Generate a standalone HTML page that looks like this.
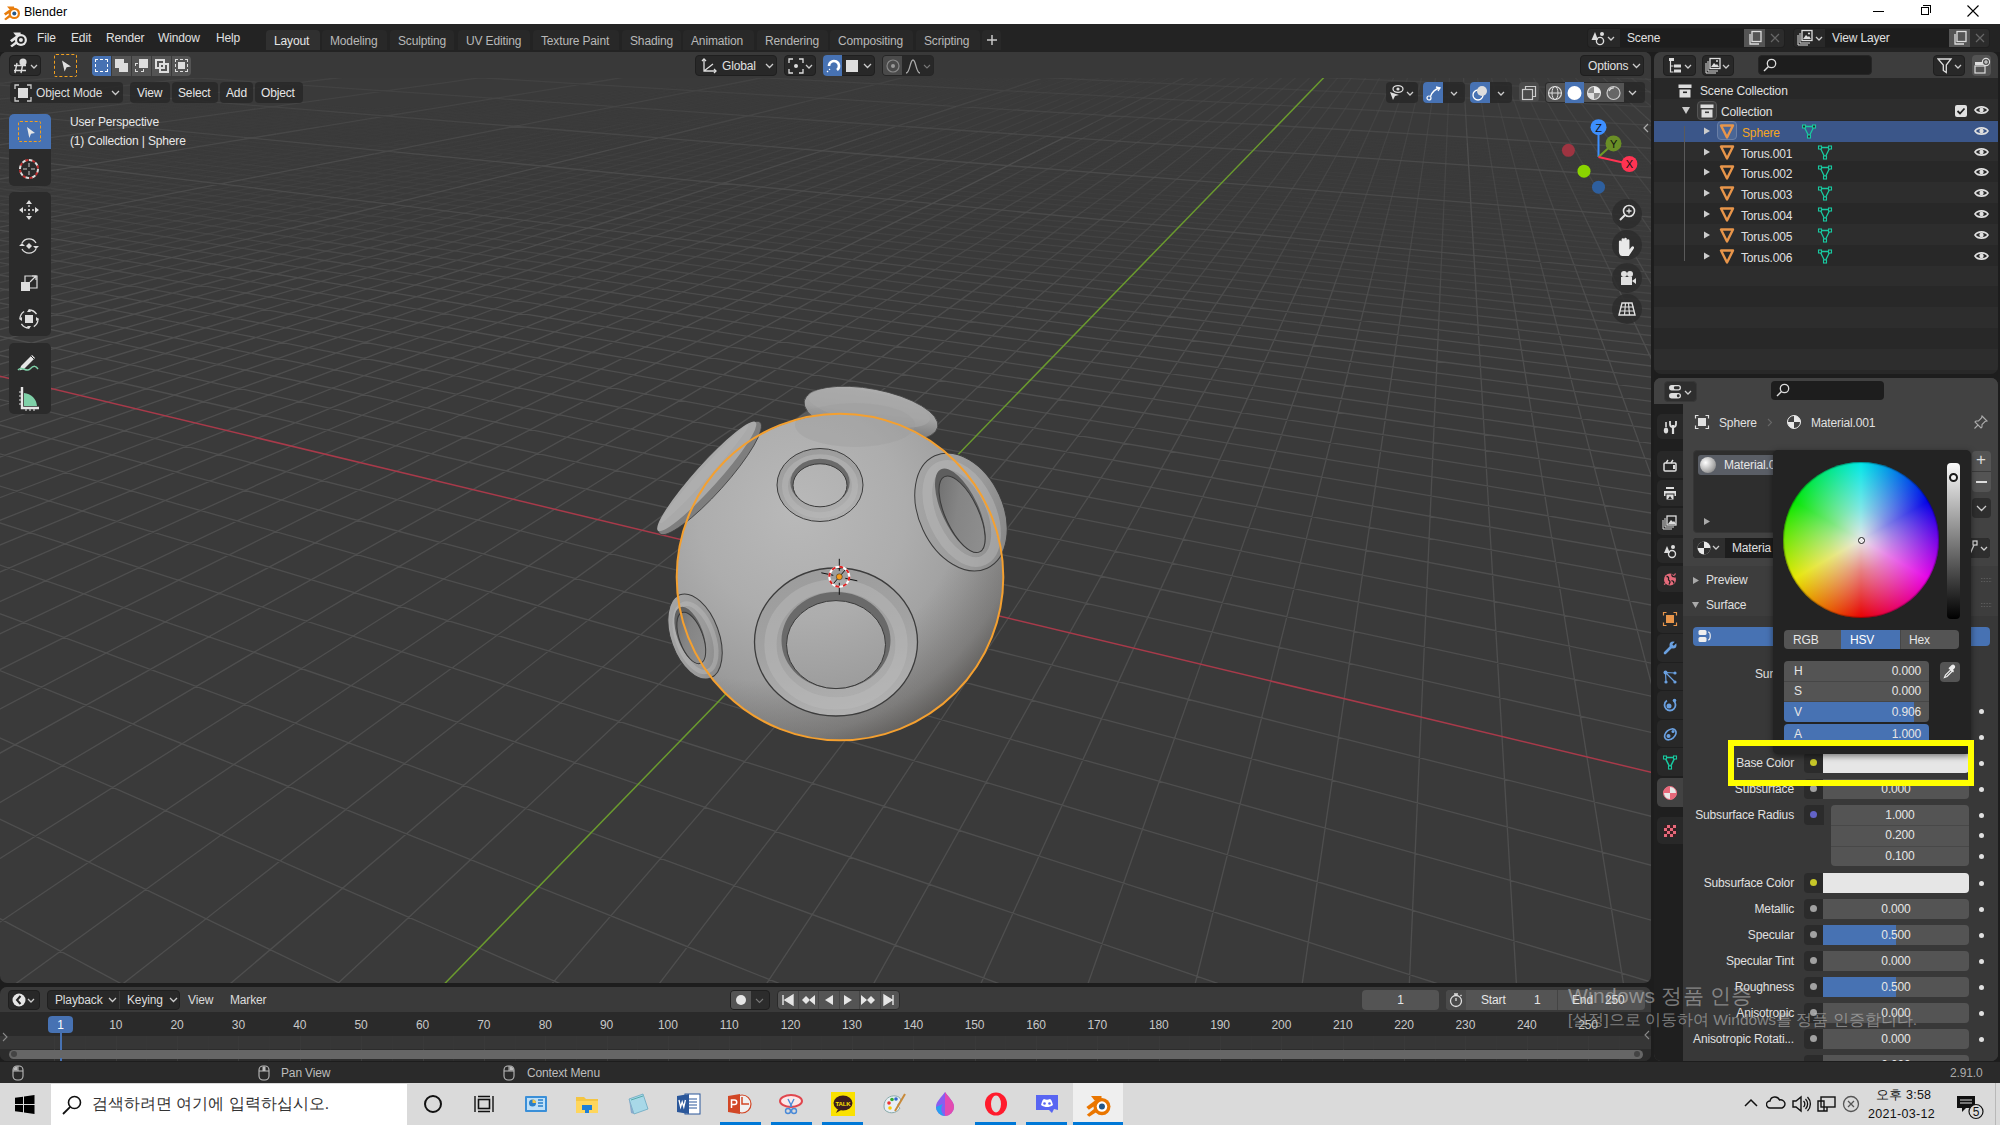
<!DOCTYPE html>
<html><head><meta charset="utf-8">
<style>
*{box-sizing:border-box;margin:0;padding:0}
html,body{width:2000px;height:1125px;overflow:hidden;background:#1d1d1d;font-family:"Liberation Sans",sans-serif;color:#e6e6e6;font-size:12px;letter-spacing:-0.15px}
.a{position:absolute}
.t{position:absolute;white-space:nowrap;line-height:14px}
#title{left:0;top:0;width:2000px;height:24px;background:#fff;color:#000}
#topbar{left:0;top:24px;width:2000px;height:28px;background:#232323}
#vp{left:0;top:52px;width:1651px;height:931px;background:#3a3a3a;border-radius:7px;overflow:hidden}
#outl{left:1654px;top:52px;width:344px;height:322px;background:#282828;border-radius:7px;overflow:hidden}
#props{left:1654px;top:378px;width:344px;height:683px;background:#424242;border-radius:7px;overflow:hidden}
#tl{left:0;top:987px;width:1651px;height:74px;background:#303030;border-radius:7px;overflow:hidden}
#status{left:0;top:1062px;width:2000px;height:21px;background:#2a2a2a}
#taskbar{left:0;top:1083px;width:2000px;height:42px;background:#dadada}
.tab{position:absolute;top:30px;height:20px;border-radius:4px 4px 0 0;background:#282828;color:#b8b8b8}
.tab span{position:absolute;top:4px}
.btn{position:absolute;background:#282828;border-radius:4px;border:1px solid #1f1f1f}
.dd:after{content:"";position:absolute;right:6px;top:6px;width:4px;height:4px;border-right:1.3px solid #ccc;border-bottom:1.3px solid #ccc;transform:rotate(45deg)}
.hb{position:absolute;background:rgba(40,40,40,0.85);border-radius:4px;color:#dcdcdc}
</style></head><body>
<!-- TITLE BAR -->
<div id="title" class="a">
 <svg class="a" style="left:3px;top:3px" width="18" height="18" viewBox="0 0 18 18">
  <path d="M4 3.4h7v2.9H6.4z" fill="#e87d0d"/><path d="M0.9 10.6L8 5.4l1.8 2.1L2.6 12.5z" fill="#e87d0d"/><path d="M1.2 15.9l5.6-4.6 1.5 2.3-5.5 3.6z" fill="#e87d0d"/>
  <circle cx="11.3" cy="10.4" r="5.7" fill="#e87d0d"/><circle cx="11.3" cy="10.4" r="3.5" fill="#fff"/><circle cx="11.3" cy="10.4" r="2" fill="#265787"/>
 </svg>
 <div class="t" style="left:24px;top:5px;font-size:12.5px;color:#000;letter-spacing:0">Blender</div>
 <div class="a" style="left:1873px;top:11px;width:11px;height:1px;background:#000"></div>
 <div class="a" style="left:1921px;top:7px;width:8px;height:8px;border:1px solid #000"></div>
 <div class="a" style="left:1923px;top:5px;width:8px;height:8px;border-top:1px solid #000;border-right:1px solid #000"></div>
 <svg class="a" style="left:1966px;top:4px" width="14" height="14" viewBox="0 0 14 14"><path d="M1.5 1.5L12.5 12.5M12.5 1.5L1.5 12.5" stroke="#000" stroke-width="1.1"/></svg>
</div>
<!-- TOP BAR -->
<div id="topbar" class="a">
 <svg class="a" style="left:9px;top:5px" width="19" height="19" viewBox="0 0 18 18">
  <path d="M4 3.4h7v2.9H6.4z" fill="#e6e6e6"/><path d="M0.9 10.6L8 5.4l1.8 2.1L2.6 12.5z" fill="#e6e6e6"/><path d="M1.2 15.9l5.6-4.6 1.5 2.3-5.5 3.6z" fill="#e6e6e6"/>
  <circle cx="11.3" cy="10.4" r="5.7" fill="#e6e6e6"/><circle cx="11.3" cy="10.4" r="3.6" fill="#232323"/><circle cx="11.3" cy="10.4" r="1.9" fill="#e6e6e6"/>
 </svg>
 <div class="t" style="left:37px;top:7px;color:#e0e0e0">File</div>
 <div class="t" style="left:71px;top:7px;color:#e0e0e0">Edit</div>
 <div class="t" style="left:106px;top:7px;color:#e0e0e0">Render</div>
 <div class="t" style="left:158px;top:7px;color:#e0e0e0">Window</div>
 <div class="t" style="left:216px;top:7px;color:#e0e0e0">Help</div>
 <div class="tab" style="left:266px;width:54px;top:6px;background:#303030;color:#e6e6e6"><span style="left:8px">Layout</span></div>
 <div class="tab" style="left:322px;width:65px;top:6px"><span style="left:8px">Modeling</span></div>
 <div class="tab" style="left:390px;width:64px;top:6px"><span style="left:8px">Sculpting</span></div>
 <div class="tab" style="left:458px;width:72px;top:6px"><span style="left:8px">UV Editing</span></div>
 <div class="tab" style="left:533px;width:86px;top:6px"><span style="left:8px">Texture Paint</span></div>
 <div class="tab" style="left:622px;width:59px;top:6px"><span style="left:8px">Shading</span></div>
 <div class="tab" style="left:683px;width:71px;top:6px"><span style="left:8px">Animation</span></div>
 <div class="tab" style="left:757px;width:71px;top:6px"><span style="left:8px">Rendering</span></div>
 <div class="tab" style="left:830px;width:83px;top:6px"><span style="left:8px">Compositing</span></div>
 <div class="tab" style="left:916px;width:64px;top:6px"><span style="left:8px">Scripting</span></div>
 <div class="a" style="left:982px;top:6px;width:19px;height:20px;background:#282828;border-radius:4px 4px 0 0"></div><svg class="a" style="left:986px;top:10px" width="12" height="12" viewBox="0 0 12 12"><path d="M6 1v10M1 6h10" stroke="#c8c8c8" stroke-width="1.5"/></svg>
 <!-- scene selector -->
 <div class="btn" style="left:1587px;top:4px;width:198px;height:20px;background:#1d1d1d"></div>
 <div class="a" style="left:1588px;top:5px;width:32px;height:18px;background:#282828;border-radius:3px 0 0 3px"></div>
 <div class="a" style="left:1744px;top:5px;width:21px;height:18px;background:#545454"></div>
 <div class="a" style="left:1765px;top:5px;width:19px;height:18px;background:#2c2c2c;border-radius:0 3px 3px 0"></div>
 <div class="t" style="left:1627px;top:7px;color:#e0e0e0">Scene</div>
 <svg class="a" style="left:1590px;top:6px" width="30" height="16" viewBox="0 0 30 16"><path d="M5 2l-3.5 8H8z" fill="#ddd"/><circle cx="12" cy="4" r="2" fill="#ddd"/><circle cx="10" cy="11" r="3.6" fill="none" stroke="#ddd" stroke-width="1.4"/><path d="M18 7l3 3 3-3" stroke="#ccc" stroke-width="1.3" fill="none"/></svg>
 <svg class="a" style="left:1747px;top:6px" width="16" height="16" viewBox="0 0 16 16"><rect x="5" y="1.5" width="9" height="10" fill="none" stroke="#ddd" stroke-width="1.3"/><path d="M3 4v10h9" stroke="#ddd" stroke-width="1.3" fill="none"/></svg>
 <svg class="a" style="left:1769px;top:8px" width="12" height="12" viewBox="0 0 12 12"><path d="M2 2l8 8M10 2l-8 8" stroke="#666" stroke-width="1.2"/></svg>
 <div class="btn" style="left:1793px;top:4px;width:197px;height:20px;background:#1d1d1d"></div>
 <div class="a" style="left:1794px;top:5px;width:31px;height:18px;background:#282828;border-radius:3px 0 0 3px"></div>
 <div class="a" style="left:1949px;top:5px;width:21px;height:18px;background:#545454"></div>
 <div class="a" style="left:1970px;top:5px;width:19px;height:18px;background:#2c2c2c;border-radius:0 3px 3px 0"></div>
 <div class="t" style="left:1832px;top:7px;color:#e0e0e0">View Layer</div>
 <svg class="a" style="left:1796px;top:5px" width="30" height="18" viewBox="0 0 30 18"><rect x="6" y="1.5" width="10" height="10" fill="none" stroke="#ddd" stroke-width="1.3"/><path d="M4 4v10h10M2 6v10h10" stroke="#ddd" stroke-width="1" fill="none"/><path d="M7 10l3-4 2 2 1-1 2 3z" fill="#ddd"/><circle cx="13" cy="4.5" r="1.1" fill="#ddd"/><path d="M20 8l3 3 3-3" stroke="#ccc" stroke-width="1.3" fill="none"/></svg>
 <svg class="a" style="left:1952px;top:6px" width="16" height="16" viewBox="0 0 16 16"><rect x="5" y="1.5" width="9" height="10" fill="none" stroke="#ddd" stroke-width="1.3"/><path d="M3 4v10h9" stroke="#ddd" stroke-width="1.3" fill="none"/></svg>
 <svg class="a" style="left:1974px;top:8px" width="12" height="12" viewBox="0 0 12 12"><path d="M2 2l8 8M10 2l-8 8" stroke="#666" stroke-width="1.2"/></svg>
</div>
<!-- VIEWPORT -->
<div id="vp" class="a">
 <svg class="a" style="left:0;top:-52px" width="1651" height="1035" viewBox="0 0 1651 1035">
  <g stroke="#4e4e4e" stroke-width="1.35" fill="none"><path stroke-opacity="0.08" d="M-5.9 134.4L32 129.4M-5.2 136.9L34.4 131.6L72 126.6M-4.4 139.6L37 134L76 128.7L113 123.7M-3.6 142.3L39.2 136.4L79.6 130.9L117.7 125.6L153.8 120.7M-7.5 148.7L39.7 142.1L83.9 135.8L125.5 129.9L164.6 124.4L201.5 119.2M-6.7 151.7L42.4 144.7L88.4 138.1L131.4 131.9L171.8 126.1L209.8 120.6L245.7 115.5M-5.9 154.8L44.9 147.4L92.2 140.5L136.5 134L178.1 128L217 122.3L253.7 116.9M-5.1 157.9L47.7 150.1L96.9 142.8L142.7 136.1L185.5 129.7L225.6 123.8L263.3 118.2L298.7 113M-4.3 161.2L50.6 152.9L101.6 145.3L148.9 138.1L193.1 131.5L234.4 125.3L273.1 119.5L309.3 114M-3.4 164.5L53.7 155.8L106.4 147.7L155.3 140.3L200.9 133.3L243.3 126.9L282.9 120.8L320.1 115.1L354.9 109.8M-2.5 167.9L56.4 158.8L110.7 150.4L161 142.6L207.6 135.4L251 128.6L291.5 122.4L329.4 116.5L364.8 111L398.1 105.8M54.3 162.7L111.3 153.7L163.8 145.4L212.4 137.8L257.4 130.7L299.3 124.1L338.4 117.9L374.9 112.2L409.1 106.8M57.5 165.9L116.4 156.4L170.6 147.7L220.5 139.7L266.7 132.3L309.6 125.5L349.5 119.1L386.7 113.1L421.5 107.5L454.1 102.3M126.5 162.1L183.8 152.6L236.3 143.9L284.6 135.9L329.3 128.5L370.7 121.6L409.2 115.3L445 109.3L478.4 103.8L509.7 98.6M191 155.1L245 146L294.5 137.6L340.1 129.9L382.3 122.8L421.4 116.2L457.8 110.1L491.7 104.4L523.3 99M198.5 157.6L253.8 148.1L304.5 139.4L351.1 131.4L394.1 124L433.8 117.2L470.7 110.9L505 105L537 99.5L566.9 94.4M262.9 150.3L314.7 141.2L362.3 132.9L406 125.3L446.3 118.2L483.7 111.7L518.4 105.6L550.7 100L580.9 94.7M267.6 153.3L321 143.8L369.8 135.1L414.5 127.1L455.8 119.8L493.9 113L529.2 106.7L562 100.9L592.5 95.4L621 90.4M331.5 145.6L381.3 136.6L426.8 128.4L468.6 120.8L507.2 113.8L542.8 107.3L575.9 101.3L606.6 95.8L635.3 90.6M342.3 147.6L393 138.2L439.2 129.7L481.6 121.8L520.6 114.6L556.6 108L589.9 101.8L620.8 96.1L649.6 90.8L676.5 85.8M404.9 139.8L451.8 130.9L494.7 122.9L534.1 115.4L570.4 108.6L604 102.3L635.1 96.4L664 91L690.9 85.9M415.5 141.7L463 132.6L506.4 124.2L546.2 116.6L582.7 109.6L616.4 103.1L647.7 97.1L676.6 91.5L703.6 86.3L728.8 81.5M487.2 135.6L531.9 126.7L572.7 118.5L610 111L644.3 104.2L675.9 97.9L705.2 92L732.3 86.6L757.6 81.5L781.1 76.8M500.5 137L545.7 127.8L586.8 119.4L624.3 111.7L658.8 104.7L690.5 98.2L719.7 92.2L746.8 86.7L772 81.5L795.5 76.7M558.1 129.2L599.5 120.6L637.2 112.7L671.7 105.5L703.4 98.9L732.7 92.7L759.8 87.1L784.9 81.9L808.3 77M572.2 130.3L613.8 121.4L651.7 113.4L686.3 106L718.1 99.2L747.3 93L774.3 87.2L799.4 81.9L822.6 76.9M628.4 122.3L666.4 114L701.1 106.5L732.8 99.5L762 93.2L788.9 87.3L813.9 81.9L837 76.8M643 123.2L681.2 114.7L715.9 107L747.6 99.9L776.7 93.4L803.6 87.4L828.3 81.9L851.3 76.7M656.4 124.5L694.6 115.7L729.3 107.8L761 100.6L790 93.9L816.7 87.8L841.4 82.2L864.2 77M708.7 116.6L743.6 108.5L775.4 101L804.5 94.2L831.2 88L855.8 82.2L878.5 76.9M723.9 117.3L758.7 109L790.4 101.4L819.4 94.4L845.9 88.1L870.3 82.2L892.8 76.8M787.8 110.4L819.3 102.4L847.9 95.2L874 88.6L898 82.6L920.1 77M803.3 110.9L834.5 102.8L862.9 95.4L888.8 88.7L912.5 82.6L934.3 76.9M849.8 103.1L877.9 95.6L903.6 88.8L927.1 82.6L948.6 76.8M864.7 103.6L892.8 95.9L918.2 89L941.5 82.6L962.9 76.7M878.9 104.3L906.7 96.5L931.9 89.4L954.8 82.9L975.9 77M921.9 96.7L946.8 89.5L969.4 82.9L990.2 76.9M937.1 97L961.7 89.6L984 82.9L1004.4 76.8M952.5 97.2L976.6 89.7L998.6 82.9L1018.6 76.8M991.6 89.8L1013.1 82.9L1032.8 76.7M1041.2 83.3L1060.1 76.8M-2.5 124.9L53.3 130.6M-3.7 120.9L52.3 126.5L111.8 132.4M-4.8 117.1L51 122.6L110.5 128.4L173.8 134.6M-4.2 110.2L51.7 115.5L111.2 121.1L174.6 127L242.2 133.4L314.6 140.2M-2.5 107.1L53.4 112.3L112.7 117.7L176 123.6L243.5 129.8L315.8 136.5L393.3 143.6M-3.5 103.9L52.4 108.9L111.9 114.3L175.3 120L243 126.2L315.5 132.7L393.2 139.8L476.8 147.3M-4.6 100.7L51.3 105.7L110.7 111L174 116.6L241.6 122.6L314 129L391.6 135.9L475.1 143.3L565.1 151.3M-3 98L53 102.8L112.5 108L176 113.6L243.7 119.5L316.2 125.8L394 132.6L477.6 139.9L567.8 147.7L665.4 156.3M-4 95.1L51.9 99.8L111.4 104.9L174.7 110.4L242.4 116.2L314.8 122.4L392.4 129L476 136.2L566 143.9L663.5 152.2M53.4 97.2L112.8 102.2L176 107.5L243.6 113.2L315.8 119.3L393.3 125.8L476.6 132.8L566.5 140.4L663.6 148.5L769 157.4M112 99.3L175.4 104.6L243.1 110.2L315.5 116.2L393.2 122.6L476.8 129.5L566.9 137L664.4 145L770.2 153.8L885.4 163.3M174.2 101.7L241.8 107.2L314.2 113.1L391.8 119.4L475.2 126.2L565.2 133.5L662.6 141.4L768.2 150L883.2 159.3M314.9 107.5L392.6 113.6L476.1 120.1L566.1 127.2L663.5 134.9L769.2 143.2L884.3 152.3L1010.1 162.2M315.9 104.8L393.4 110.8L476.7 117.3L566.5 124.3L663.7 131.8L769.1 139.9L883.8 148.8L1009.2 158.5L1146.8 169.2M393.3 108.1L476.8 114.5L566.9 121.4L664.4 128.8L770.2 136.9L885.3 145.6L1011.2 155.2L1149.3 165.8L1301.6 177.4M489.7 112.8L579.1 119.5L675.7 126.7L780.4 134.6L894.3 143.1L1018.6 152.4L1154.8 162.7L1304.8 173.9M516.2 112.1L604.8 118.6L700.3 125.7L803.7 133.3L915.9 141.6L1038.1 150.6L1171.8 160.5L1318.6 171.3M628.3 117.6L722.3 124.5L823.8 131.9L933.8 139.9L1053.3 148.5L1183.6 158L1326.3 168.4L1483.3 179.8M651.5 116.6L743.9 123.3L843.6 130.4L951.3 138.1L1068.1 146.5L1195.1 155.6L1333.8 165.6L1486 176.5M767.7 122.3L865.9 129.2L971.9 136.7L1086.6 144.8L1211.2 153.6L1346.8 163.2L1495.2 173.7L1658.2 185.2M786.9 121L883.4 127.7L987.3 134.9L1099.5 142.7L1221.1 151.2L1353.2 160.4L1497.2 170.4L1655 181.4M923.8 125.2L1023.7 131.9L1131.2 139.2L1247 147L1372.4 155.5L1508.4 164.7L1656.5 174.8M1039.8 130.4L1144.6 137.3L1257.3 144.9L1378.9 153L1510.6 161.8L1653.6 171.3M1059 129L1161.7 135.8L1272 143.1L1390.8 150.9L1519 159.3L1657.9 168.5M1174.6 134L1281.8 141L1397 148.4L1521 156.5L1655 165.2M1191.2 132.5L1296 139.2L1408.4 146.4L1529.1 154.2L1659.2 162.5M1304.3 137.1L1413.5 144L1530.5 151.4L1656.4 159.4M1313.5 135.2L1419.2 141.8L1532.3 148.8L1653.6 156.4M1430 139.9L1540 146.6L1657.7 153.9M1541.7 144.1L1655 151"/>
<path stroke-opacity="0.17" d="M-7.7 172.5L54.3 162.7M-6.8 176.2L57.5 165.9M-5 183.9L63.8 172.5L126.5 162.1M-4.1 188L67.3 176L132.1 165L191 155.1M-3.1 192.2L70.9 179.5L137.8 168L198.5 157.6M-2.1 196.6L74.6 183.2L143.6 171.1L206.1 160.2L262.9 150.3M72.2 188L144.1 175.2L208.9 163.7L267.6 153.3M76.1 192L150.3 178.5L216.9 166.4L277 155.5L331.5 145.6M156.6 181.9L225 169.2L286.6 157.9L342.3 147.6M163.1 185.3L233.4 172.1L296.4 160.2L353.3 149.5L404.9 139.8M241 175.2L305.3 162.9L363.2 151.7L415.5 141.7M322.6 168.6L383.4 156.4L437.9 145.5L487.2 135.6M333.3 171.2L395.2 158.5L450.6 147.2L500.5 137M343.2 174.1L406 161L462.1 149.2L512.5 138.7L558.1 129.2M418.3 163.2L475.3 151L526.3 140.1L572.2 130.3M430.9 165.4L488.6 152.8L540.2 141.6L586.5 131.5L628.4 122.3M502.2 154.7L554.3 143L601 132.6L643 123.2M514.7 156.9L567.2 144.9L614.1 134.1L656.4 124.5M526.5 159.3L579.9 146.8L627.5 135.7L670.2 125.7L708.7 116.6M594.7 148.3L642.5 136.9L685.3 126.6L723.9 117.3M623.5 151.8L671.7 139.7L714.7 128.8L753.2 119.1L787.8 110.4M687.3 140.9L730.3 129.8L768.7 119.8L803.3 110.9M703.1 142.2L746.1 130.8L784.4 120.6L818.8 111.4L849.8 103.1M761 132L799.4 121.5L833.8 112.1L864.7 103.6M775.8 133.4L814 122.6L848.2 113L878.9 104.3M792.1 134.4L830.1 123.4L864 113.5L894.4 104.7L921.9 96.7M846.4 124.1L880 114.1L910.1 105.1L937.1 97M862.7 124.9L896 114.6L925.7 105.4L952.5 97.2M879.2 125.6L912.1 115.2L941.5 105.8L967.8 97.4L991.6 89.8M943.1 116.8L971.7 107L997.3 98.3L1020.4 90.4L1041.2 83.3M959.6 117.4L987.7 107.4L1012.8 98.5L1035.4 90.5L1055.8 83.3L1074.3 76.8M1003.8 107.8L1028.4 98.7L1050.5 90.6L1070.4 83.3L1088.4 76.7M1018.9 108.5L1043.1 99.3L1064.6 91.1L1084.1 83.7L1101.7 76.9M1058.7 99.6L1079.8 91.2L1098.7 83.7L1115.8 76.9M1074.5 99.8L1095 91.3L1113.4 83.7L1130 76.8M1090 100.1L1110 91.4L1127.9 83.7L1144.1 76.7M1124.4 91.9L1141.8 84L1157.4 76.9M1139.7 92L1156.5 84L1171.5 76.9M-2.6 146.9L53.5 153.3M-3.9 141.9L52.1 148.1L111.6 154.8L175 161.9M-5.2 137.2L50.7 143.3L110.1 149.7L173.5 156.6L241.1 164M-3.2 133L52.8 139L112.4 145.3L175.9 152.1L243.6 159.3L316.2 167M-4.4 128.7L51.5 134.5L111 140.7L174.4 147.3L242 154.4L314.5 161.9L392.1 170M53.3 130.6L112.7 136.6L175.9 143.1L243.5 150L315.7 157.3L393.2 165.2L476.5 173.7M111.8 132.4L175.2 138.8L242.9 145.5L315.4 152.8L393.1 160.5L476.7 168.9L566.9 177.9M173.8 134.6L241.4 141.2L313.8 148.3L391.4 155.9L474.8 164L564.9 172.8M314.6 140.2L392.3 147.5L475.8 155.4L565.9 163.8L663.4 173L769.1 182.9M393.3 143.6L476.6 151.3L566.4 159.6L663.6 168.5L769 178.3L883.7 188.8M476.8 147.3L566.9 155.5L664.4 164.3L770.2 173.9L885.5 184.3M565.1 151.3L662.4 160L768.1 169.4L883.1 179.6L1008.8 190.7M665.4 156.3L771.3 165.5L886.6 175.5L1012.6 186.5L1151 198.6M663.5 152.2L769.2 161.3L884.3 171.2L1010.1 181.9L1148.2 193.8M769 157.4L883.8 167.1L1009.2 177.6L1146.7 189.2L1298.3 202M885.4 163.3L1011.3 173.7L1149.5 185.1L1301.8 197.8M883.2 159.3L1008.9 169.6L1146.8 180.8L1298.9 193.2L1467.4 206.9M1010.1 162.2L1148.1 173L1300.3 185L1469 198.3L1656.9 213.1M1146.8 169.2L1298.4 180.9L1466.3 193.9L1653.4 208.4M1301.6 177.4L1470.4 190.2L1658.5 204.6M1304.8 173.9L1470.6 186.3L1655.1 200.2M1318.6 171.3L1480.5 183.3L1660 196.6M1483.3 179.8L1656.7 192.5M1486 176.5L1653.5 188.5"/>
<path stroke-opacity="0.25" d="M-8 202.3L72.2 188M-7 207L76.1 192M-6 211.9L80.1 196L156.6 181.9M-4.9 217L84.2 200.2L163.1 185.3M88 204.6L169.1 189L241 175.2M177.8 197.5L254.6 182.2L322.6 168.6M185.1 201.5L263.8 185.4L333.3 171.2M191.8 205.7L272.3 188.9L343.2 174.1M282 192.2L354.4 176.8L418.3 163.2M292.1 195.7L365.9 179.6L430.9 165.4M377.7 182.5L443.8 167.7L502.2 154.7M388.6 185.7L455.6 170.4L514.7 156.9M397.3 189.5L466.1 173.4L526.5 159.3M479.8 175.9L540.8 161.3L594.7 148.3M506.7 181.3L568.9 165.6L623.5 151.8M584.1 167.7L639 153.5L687.3 140.9M599.5 169.8L654.7 155.1L703.1 142.2M613 172.5L668.9 157.2L717.8 143.9L761 132M683.8 159.3L732.7 145.5L775.8 133.4M700.3 161.1L749.2 146.9L792.1 134.4M765.8 148.2L808.6 135.4L846.4 124.1M782.7 149.6L825.3 136.4L862.7 124.9M799.9 151L842.1 137.5L879.2 125.6M874.2 140.3L910.8 127.8L943.1 116.8M891.7 141.4L927.8 128.6L959.6 117.4M944.9 129.4L976.1 117.9L1003.8 107.8M961.1 130.6L991.8 118.9L1018.9 108.5M978.5 131.4L1008.6 119.5L1035.2 108.9L1058.7 99.6M1025.6 120L1051.5 109.3L1074.5 99.8M1042.2 120.8L1067.6 109.8L1090 100.1M1058.5 121.8L1083.2 110.6L1105 100.7L1124.4 91.9M1099.8 111L1120.9 100.9L1139.7 92M1152.8 101.4L1170.3 92.2L1185.8 84L1199.7 76.7M1168.2 102L1184.9 92.7L1199.8 84.4L1213.1 76.9M1184.3 102.2L1200.3 92.8L1214.5 84.4L1227.2 76.9M1215.6 92.9L1229.1 84.4L1241.2 76.8M1243.8 84.4L1255.3 76.7M1258.1 84.7L1268.8 77M1652.1 82.9L1651.6 82.5L1651 82.1L1650.4 81.7L1649.9 81.3L1649.3 80.9L1648.8 80.5L1648.2 80.1L1647.7 79.7L1647.2 79.3L1646.6 78.9L1646.1 78.6L1645.6 78.2L1645 77.8L1644.5 77.4M-4.1 168.5L51.8 175.5M-5.6 162.4L50.3 169.3L109.8 176.6M-4.7 151.7L51.2 158.2L110.7 165.2L174.1 172.6L241.8 180.5M53.5 153.3L113.1 160.1L176.7 167.3L244.5 175.1L317.1 183.3M175 161.9L242.8 169.4L315.3 177.5L393 186.1M241.1 164L313.5 171.9L391.1 180.3L474.6 189.4M316.2 167L394 175.3L477.7 184.2L568 193.8M392.1 170L475.7 178.7L565.8 188.1L663.3 198.3M476.5 173.7L566.4 182.9L663.5 192.8L768.9 203.5M566.9 177.9L664.4 187.6L770.3 198.2L885.6 209.7M564.9 172.8L662.2 182.4L767.9 192.7L882.9 204M769.1 182.9L884.2 193.8L1010.1 205.6L1148.2 218.6M883.7 188.8L1009.1 200.4L1146.6 213.1M885.5 184.3L1011.4 195.7L1149.7 208.2L1302.1 222M1008.8 190.7L1146.8 203L1298.9 216.5L1467.4 231.5M1151 198.6L1303.5 211.9L1472.6 226.7M1148.2 193.8L1300.4 206.8L1469.1 221.3L1657.1 237.4M1298.3 202L1466.3 216.1L1653.3 231.8M1301.8 197.8L1470.7 211.7L1658.8 227.3M1467.4 206.9L1655.1 222.1"/>
<path stroke-opacity="0.33" d="M-3.8 222.3L88 204.6M-9.3 235L90.6 215L177.8 197.5M95.2 219.8L185.1 201.5M99.6 224.9L191.8 205.7M104.5 230.1L199.5 209.9L282 192.2M207.5 214.2L292.1 195.7M215.7 218.6L302.4 199.3L377.7 182.5M311.9 203.2L388.6 185.7M318.3 208L397.3 189.5M329.5 211.9L410 192.6L479.8 175.9M435.1 199.4L506.7 181.3M448.8 202.7L521.3 183.9L584.1 167.7M536.2 186.6L599.5 169.8M548.7 190.2L613 172.5M563 193.4L627.8 175.1L683.8 159.3M644.1 177.4L700.3 161.1M660.8 179.6L717 162.8L765.8 148.2M677.8 182L734.1 164.6L782.7 149.6M751.4 166.4L799.9 151M784.1 171.1L832.4 154.6L874.2 140.3M850.3 156L891.7 141.4M868.4 157.5L909.3 142.5L944.9 129.4M926 144L961.1 130.6M944.1 145.1L978.5 131.4M962.3 146.3L996.1 132.2L1025.6 120M1013.3 133.3L1042.2 120.8M1030.2 134.6L1058.5 121.8M1048.3 135.4L1075.8 122.4L1099.8 111M1110.8 123.6L1133.2 111.8L1152.8 101.4M1127.7 124.6L1149.3 112.6L1168.2 102M1166.2 113L1184.3 102.2M1183 113.5L1200.3 102.6L1215.6 92.9M1216.5 102.8L1231 93L1243.8 84.4M1232.4 103.3L1246 93.5L1258.1 84.7M1249 103.3L1261.7 93.4L1272.9 84.7L1282.8 76.9M1265.8 103.2L1277.4 93.3L1287.7 84.6L1296.8 76.8M1282.6 103.1L1293.1 93.2L1302.5 84.5L1310.8 76.7M1315.5 103.3L1324.1 93.4L1331.7 84.7L1338.4 76.9M1332.2 103.2L1339.8 93.3L1346.5 84.6L1352.4 76.8M1348.9 103.1L1355.4 93.2L1361.2 84.5L1366.4 76.7M1365.3 103.4L1370.8 93.5L1375.7 84.8L1380.1 77M1382 103.3L1386.5 93.4L1390.5 84.7L1394 76.9M1398.6 103.2L1402.1 93.3L1405.2 84.6L1408 76.8M1415.3 103.1L1417.7 93.2L1419.9 84.5L1421.9 76.7M1431.8 103.4L1433.3 93.5L1434.5 84.8L1435.7 77M1448.4 103.3L1448.9 93.4L1449.2 84.7L1449.6 76.9M1481.6 103.1L1480 93.2L1478.6 84.5L1477.3 76.7M1497.7 101.6L1495.3 92.4L1493.2 84.3L1491.3 77M1513.2 99.1L1510.2 90.9L1507.6 83.6L1505.1 76.9M1531.9 104.5L1528.2 96.5L1524.8 89.4L1521.8 82.8L1519 76.8M1546.7 101.1L1542.8 94.2L1539.2 87.9L1535.8 82.1L1532.8 76.7M1565.2 104.3L1561 98L1557 92.2L1553.4 86.7L1550 81.7L1546.8 77M1578.6 100.1L1574.6 94.9L1570.7 89.9L1567.2 85.3L1563.8 81L1560.6 76.9M1595.4 100.7L1591.4 96.1L1587.6 91.8L1584 87.8L1580.7 83.9L1577.5 80.3L1574.4 76.8M1614.3 103.3L1610.5 99.4L1606.8 95.7L1603.4 92.2L1600.1 88.8L1596.9 85.6L1593.9 82.5L1591 79.6L1588.2 76.8M1645.2 101.4L1642.6 99.2L1640.1 97.1L1637.6 95L1635.2 93L1632.8 91L1630.6 89.1L1628.3 87.2L1626.2 85.4L1624 83.6L1622 81.9L1620 80.2L1618 78.5L1616.1 76.9M1653.1 94.9L1651.5 93.6L1649.9 92.3L1648.3 91.1L1646.7 89.9L1645.2 88.7L1643.7 87.6L1642.2 86.4L1640.7 85.3L1639.3 84.2L1637.9 83.1L1636.5 82L1635.1 80.9L1633.8 79.9L1632.4 78.9L1631.1 77.8L1629.8 76.8M1653.3 83.7L1652.7 83.3L1652.1 82.9M-5.1 181.1L50.9 188.5M-2.6 174.8L53.5 182.1L113.1 189.8M51.8 175.5L111.4 183L174.8 191L242.6 199.6M109.8 176.6L173.1 184.4L240.7 192.7L313.1 201.6M241.8 180.5L314.2 188.9L391.9 198L475.5 207.8M317.1 183.3L395 192.2L478.9 201.8L569.3 212.1M393 186.1L476.7 195.5L566.9 205.5L664.5 216.4M474.6 189.4L564.6 199.2L662 209.8L767.7 221.4M568 193.8L665.7 204.2L771.6 215.5L887.1 227.8M663.3 198.3L769 209.3L884.2 221.3M768.9 203.5L883.6 215.2L1009 228M885.6 209.7L1011.6 222.3L1149.9 236.1M882.9 204L1008.7 216.3L1146.7 229.8L1298.8 244.6M1148.2 218.6L1300.5 232.9L1469.3 248.8M1146.6 213.1L1298.2 227.1L1466.2 242.5M1302.1 222L1471 237.3L1659.2 254.3M1467.4 231.5L1655.2 248.2M1472.6 226.7L1661 243.1"/>
<path stroke-opacity="0.42" d="M-4.8 83.6L-0.3 83.2L4.2 82.8L8.6 82.3L13 81.9L17.4 81.5L21.8 81L26.1 80.6L30.4 80.2L34.7 79.8L38.9 79.4L43.2 79L47.4 78.6L51.5 78.2L55.7 77.8L59.8 77.3L63.9 77M-2.9 99.4L12.2 97.8L27 96.2L41.5 94.6L55.7 93.1L69.6 91.6L83.2 90.1L96.6 88.6L109.7 87.2L122.6 85.8L135.2 84.5L147.6 83.1L159.8 81.8L171.7 80.5L183.4 79.3L194.9 78L206.2 76.8M172 98.1L193.9 95.4L215 92.8L235.5 90.4L255.2 87.9L274.4 85.6L292.9 83.4L310.9 81.2L328.3 79L345.2 77M320 100.1L347.3 96.3L373.3 92.7L398.1 89.2L421.7 85.9L444.4 82.8L466.1 79.7L486.8 76.8M498.1 97.8L527.2 93.1L554.6 88.6L580.4 84.4L604.8 80.5L627.9 76.7M662.1 97.4L691.1 91.7L718.1 86.4L743.2 81.5L766.7 76.9M-8.3 241L95.2 219.8M-7.2 247.2L99.6 224.9M-6 253.7L104.5 230.1M109.7 235.5L207.5 214.2M115 241.1L215.7 218.6M120.1 247L223.4 223.4L311.9 203.2M226.6 229.5L318.3 208M235.6 234.5L329.5 211.9M805.5 101.7L834.3 94.6L860.6 88.2L884.8 82.2L907.1 76.7M351.8 220.4L435.1 199.4M364.1 224.7L448.8 202.7M462.8 206.2L536.2 186.6M473.6 210.7L548.7 190.2M487.2 214.7L563 193.4M579 196.3L644.1 177.4M595.3 199.2L660.8 179.6M612 202.3L677.8 182M695.1 184.4L751.4 166.4M982.1 98L1005.5 90.3L1026.7 83.3L1045.9 76.9M727.6 190.4L784.1 171.1M802.3 173L850.3 156M820.8 175L868.4 157.5M838.5 177.4L885.6 159.4L926 144M904.2 161L944.1 145.1M923.1 162.5L962.3 146.3M941.3 164.5L980 147.7L1013.3 133.3M997.7 149.3L1030.2 134.6M1016.6 150.5L1048.3 135.4M1136.9 101.2L1155 92.1L1171.1 84L1185.6 76.8M1085 137.1L1110.8 123.6M1102.8 138.5L1127.7 124.6M1121.6 139.3L1145.5 125.2L1166.2 113M1140.1 140.5L1163.1 126L1183 113.5M1159.2 141.4L1181.1 126.6L1200.1 113.9L1216.5 102.8M1199 127.5L1216.8 114.6L1232.4 103.3M1218.1 127.5L1234.6 114.6L1249 103.3M1237.4 127.4L1252.6 114.4L1265.8 103.2M1256.6 127.2L1270.5 114.3L1282.6 103.1M1294.5 127.5L1305.8 114.6L1315.5 103.3M1313.8 127.4L1323.7 114.4L1332.2 103.2M1333 127.2L1341.5 114.3L1348.9 103.1M1351.8 127.7L1359 114.7L1365.3 103.4M1371 127.5L1376.9 114.6L1382 103.3M1390.1 127.3L1394.7 114.4L1398.6 103.2M1409.2 127.2L1412.5 114.3L1415.3 103.1M1428.2 127.7L1430.1 114.7L1431.8 103.4M1447.3 127.5L1447.9 114.6L1448.4 103.3M1485.5 127.2L1483.4 114.3L1481.6 103.1M1507.1 137.1L1503.6 123.6L1500.5 111.9L1497.7 101.6M1524.6 129.9L1520.3 118.4L1516.6 108.2L1513.2 99.1M1545.8 134L1540.6 123L1536 113.2L1531.9 104.5M1566.7 136.1L1560.9 125.9L1555.7 116.8L1551 108.6L1546.7 101.1M1586.4 135.7L1580.4 126.7L1574.9 118.6L1569.9 111.2L1565.2 104.3M1604.2 132.9L1598.2 125.3L1592.8 118.3L1587.7 111.8L1583 105.7L1578.6 100.1M1625.3 134.7L1619.5 128L1614 121.8L1608.9 116L1604.1 110.6L1599.6 105.5L1595.4 100.7M1647.2 136.8L1641.7 131.2L1636.5 125.9L1631.6 120.9L1626.9 116.1L1622.5 111.6L1618.3 107.3L1614.3 103.3M1653.5 108.4L1650.7 106L1647.9 103.7L1645.2 101.4M-6.1 195.1L49.8 203M-3.5 188.2L52.6 195.8L112.2 204M50.9 188.5L110.4 196.4L173.8 204.9L241.5 213.9M113.1 189.8L176.7 198.1L244.6 206.9L317.2 216.3M242.6 199.6L315.1 208.7L392.9 218.5M313.1 201.6L390.7 211.1L474.2 221.4M475.5 207.8L565.6 218.3L663.1 229.7M569.3 212.1L667 223.3L773.2 235.4M664.5 216.4L770.4 228.2L885.7 241M767.7 221.4L882.7 233.9L1008.5 247.6M887.1 227.8L1013.2 241.3M884.2 221.3L1010.1 234.4L1148.3 248.8M1009 228L1146.5 242.1L1298.1 257.5M1149.9 236.1L1302.4 251.3M1298.8 244.6L1467.4 261.1M1469.3 248.8L1657.3 266.4M1466.2 242.5L1653.2 259.8M-2.9 84.8L53.1 89.3L112.6 94.1L176 99.1M181.7 76.9L236.3 80.6L294 84.6L355 88.8L419.6 93.2L488.1 97.9M466 76.9L516.1 79.9L568.4 83.1L623.1 86.4L680.4 89.8L740.4 93.4L803.4 97.2M749.6 77L792.3 79.3L836.4 81.6L882 84.1L929.2 86.6L978.1 89.2L1028.8 91.9L1081.3 94.7L1135.8 97.7M1029.1 76.9L1061.7 78.4L1095 80.1L1129.1 81.7L1164 83.4L1199.8 85.1L1236.4 86.9L1273.9 88.7L1312.3 90.5L1351.7 92.4L1392.2 94.4L1433.6 96.4L1476.2 98.4M1311.1 76.9L1330.8 77.8L1350.6 78.7L1370.8 79.6L1391.1 80.4L1411.8 81.4L1432.7 82.3L1453.9 83.2L1475.3 84.1L1497.1 85.1L1519.1 86.1L1541.5 87L1564.1 88L1587 89L1610.3 90.1L1633.8 91.1L1657.7 92.2M1592.5 77L1596.3 77.1L1600 77.3L1603.7 77.4L1607.5 77.6L1611.2 77.7L1615 77.9L1618.8 78L1622.5 78.2L1626.3 78.4L1630.1 78.5L1633.9 78.7L1637.7 78.8L1641.5 79L1645.4 79.1L1649.2 79.3L1653.1 79.4"/>
<path stroke-opacity="0.50" d="M76.4 109.7L101.6 106.6L125.9 103.7L149.4 100.8L172 98.1M229.6 112.7L261.3 108.3L291.4 104.1L320 100.1M398.7 114L434.1 108.3L467.1 102.9L498.1 97.8M596.8 110.2L630.7 103.6L662.1 97.4M-4.8 260.5L109.7 235.5M-3.5 267.6L115 241.1M118.7 254.8L226.6 229.5M124.5 261.1L235.6 234.5M773.9 109.5L805.5 101.7M253.7 245.2L351.8 220.4M376.7 229.1L462.8 206.2M385 235L473.6 210.7M502.4 218.5L579 196.3M518 222.4L595.3 199.2M629.2 205.4L695.1 184.4M956.2 106.5L982.1 98M746 192.9L802.3 173M764.9 195.5L820.8 175M857.7 179.5L904.2 161M877.2 181.5L923.1 162.5M959.7 166.5L997.7 149.3M979.5 168.2L1016.6 150.5M1116.4 111.4L1136.9 101.2M1019.9 171.5L1055.1 152.9L1085 137.1M1039.7 173.6L1073.8 154.6L1102.8 138.5M1060.7 175.4L1093.6 155.8L1121.6 139.3M1113.1 157.5L1140.1 140.5M1133.4 158.7L1159.2 141.4M1153.9 160.1L1178.3 142.5L1199 127.5M1176.1 160.3L1198.8 142.6L1218.1 127.5M1198.9 160.1L1219.7 142.4L1237.4 127.4M1221.6 159.8L1240.5 142.2L1256.6 127.2M1266.1 160.3L1281.5 142.6L1294.5 127.5M1288.8 160L1302.3 142.4L1313.8 127.4M1311.4 159.8L1323 142.2L1333 127.2M1333.5 160.5L1343.4 142.7L1351.8 127.7M1356 160.3L1364.1 142.6L1371 127.5M1378.6 160L1384.8 142.4L1390.1 127.3M1401.1 159.8L1405.5 142.2L1409.2 127.2M1423.4 160.5L1426 142.7L1428.2 127.7M1445.9 160.2L1446.7 142.5L1447.3 127.5M1464.4 93.3L1463.9 84.6L1463.5 76.8M1490.7 159.8L1487.9 142.2L1485.5 127.2M1516.1 171.1L1511.2 152.7L1507.1 137.1M1534.9 158.2L1529.4 143.1L1524.6 129.9M1558.2 160.4L1551.6 146.3L1545.8 134M1580.4 160L1573.2 147.3L1566.7 136.1M1608.5 168.5L1600.4 156.4L1593 145.5L1586.4 135.7M1633.7 170.9L1625.3 160.1L1617.6 150.2L1610.6 141.2L1604.2 132.9M1653.6 166.8L1645.7 157.8L1638.4 149.5L1631.6 141.8L1625.3 134.7M1653.1 142.8L1647.2 136.8M1620.7 94L1617.7 91.2L1614.9 88.6L1612.1 86L1609.4 83.6L1606.9 81.2L1604.4 78.9L1601.9 76.7M-4.4 203.1L51.6 211.2L111.1 219.9M49.8 203L109.2 211.4L172.6 220.3M112.2 204L175.7 212.7L243.5 222M241.5 213.9L313.9 223.5L391.7 233.8M317.2 216.3L395.2 226.4L479.1 237.2M392.9 218.5L476.6 229.1L566.8 240.5M474.2 221.4L564.3 232.4L661.7 244.4M663.1 229.7L769 242.1L884.2 255.5M773.2 235.4L888.8 248.6L1015.1 263M885.7 241L1011.7 255.1M1008.5 247.6L1146.6 262.6M1013.2 241.3L1151.7 256L1304.5 272.3M1148.3 248.8L1300.6 264.7L1469.5 282.3M1298.1 257.5L1466 274.6M1302.4 251.3L1471.4 268.2L1659.7 287M1467.4 261.1L1655.3 279.5M176 99.1L243.7 104.6L316.2 110.4M488.1 97.9L561 102.9L638.6 108.2L721.5 113.9M803.4 97.2L869.5 101.2L939.1 105.4L1012.4 109.8M1135.8 97.7L1192.4 100.7L1251.2 103.8L1312.3 107.1L1375.9 110.5M1476.2 98.4L1519.8 100.5L1564.7 102.7L1610.7 104.9L1658.1 107.2"/>
<path stroke-opacity="0.58" d="M-5.2 119.7L23 116.2L50.2 112.9L76.4 109.7M160.8 122.3L196.1 117.4L229.6 112.7M320.1 126.8L360.8 120.2L398.7 114M519.9 125.3L560 117.4L596.8 110.2M-2.2 275L120.1 247M-10 284.9L118.7 254.8M700.6 127.5L739.2 118L773.9 109.5M136.5 274.8L253.7 245.2M263.7 250.7L364.1 224.7M274.1 256.4L376.7 229.1M397.3 240L487.2 214.7M411.2 245L502.4 218.5M534.1 226.4L612 202.3M550.6 230.5L629.2 205.4M894.7 126.8L927.2 116.1L956.2 106.5M660.7 213.2L727.6 190.4M679.2 216.6L746 192.9M782.9 198.6L838.5 177.4M802.6 201.4L857.7 179.5M822.6 204.1L877.2 181.5M841.3 207.8L895.7 184.2L941.3 164.5M914.9 186.9L959.7 166.5M935.5 189.1L979.5 168.2M1093.2 123L1116.4 111.4M978 193.6L1019.9 171.5M998.8 196.4L1039.7 173.6M1021 198.8L1060.7 175.4M1042.6 201.9L1081.1 177.6L1113.1 157.5M1065.7 204.4L1102.8 179.4L1133.4 158.7M1089.5 206.7L1124.8 181.2L1153.9 160.1M1116.3 207.1L1149.1 181.4L1176.1 160.3M1144 206.8L1174.1 181.2L1198.9 160.1M1171.6 206.4L1199 180.9L1221.6 159.8M1225.6 207.1L1247.8 181.4L1266.1 160.3M1253.1 206.7L1272.7 181.1L1288.8 160M1280.6 206.4L1297.5 180.9L1311.4 159.8M1307.3 207.3L1321.6 181.6L1333.5 160.5M1334.7 207L1346.4 181.4L1356 160.3M1362.1 206.7L1371.2 181.1L1378.6 160M1389.4 206.4L1395.8 180.8L1401.1 159.8M1416.5 207.3L1420.3 181.6L1423.4 160.5M1443.8 207L1445 181.3L1445.9 160.2M1465 103.2L1464.4 93.3M1498.2 206.3L1494.1 180.8L1490.7 159.8M1521.9 192.9L1516.1 171.1M1549 196.6L1541.4 175.8L1534.9 158.2M1574.6 195.3L1565.8 176.6L1558.2 160.4M1598 190.8L1588.6 174.4L1580.4 160M1628 197.3L1617.7 182L1608.5 168.5M1653.4 196.2L1643 182.9L1633.7 170.9M1633.8 106L1630.3 102.8L1627 99.7L1623.8 96.8L1620.7 94M-5.5 220L50.4 228.6M-2.7 211.6L53.4 220L113.1 228.9M111.1 219.9L174.6 229.1L242.4 238.9M172.6 220.3L240.2 229.8L312.6 240M243.5 222L316.2 231.9L394.1 242.6M391.7 233.8L475.3 245M479.1 237.2L569.5 248.9M566.8 240.5L664.5 252.8M661.7 244.4L767.4 257.4M884.2 255.5L1010.1 270.3M1015.1 263L1153.9 278.8M1011.7 255.1L1150.1 270.5L1302.7 287.5M1146.6 262.6L1298.8 279.2M1304.5 272.3L1473.7 290.3M1469.5 282.3L1657.6 301.9M1466 274.6L1653 293.7M-3 113.7L52.9 119.1L112.5 124.8M316.2 110.4L394 116.6L477.6 123.3M721.5 113.9L810.1 120L905.2 126.5M1012.4 109.8L1089.6 114.4L1171.2 119.3L1257.5 124.5M1375.9 110.5L1442.1 114.1L1511.2 117.7L1583.2 121.6L1658.4 125.6"/>
<path stroke-opacity="0.67" d="M41.8 138.9L83.8 133L123.4 127.5L160.8 122.3M276.3 134L320.1 126.8M476 133.9L519.9 125.3M-8.7 293.1L124.5 261.1M657.7 138.1L700.6 127.5M143.1 282L263.7 250.7M278.9 264L385 235M289.1 270.5L397.3 240M425.5 250.1L518 222.4M440.3 255.3L534.1 226.4M857.9 138.9L894.7 126.8M580.4 240.6L660.7 213.2M698.1 220.1L764.9 195.5M716.3 224.1L782.9 198.6M736.2 227.7L802.6 201.4M756.7 231.5L822.6 204.1M775.1 236.4L841.3 207.8M795.6 240.9L861.2 211.2L914.9 186.9M882.7 214.2L935.5 189.1M927.1 220.4L978 193.6M949.1 224.1L998.8 196.4M972.6 227.4L1021 198.8M995.2 231.7L1042.6 201.9M1019.9 235.2L1065.7 204.4M1045.8 238.4L1089.5 206.7M1075.5 238.9L1116.3 207.1M1106.6 238.5L1144 206.8M1137.6 238.1L1171.6 206.4M1198 238.9L1225.6 207.1M1228.9 238.5L1253.1 206.7M1259.7 238L1280.6 206.4M1289.5 239.2L1307.3 207.3M1320.3 238.8L1334.7 207M1350.9 238.4L1362.1 206.7M1381.5 238L1389.4 206.4M1411.8 239.2L1416.5 207.3M1442.4 238.7L1443.8 207M1465.7 114.4L1465 103.2M1503.3 237.9L1498.2 206.3M1528.8 219.4L1521.9 192.9M1558.1 221.3L1549 196.6M1584.9 217.3L1574.6 195.3M1621.4 231.6L1608.8 209.6L1598 190.8M1653.1 234.5L1639.7 214.6L1628 197.3M1645 116.3L1641.1 112.7L1637.4 109.3L1633.8 106M50.4 228.6L109.9 237.8M113.1 228.9L176.7 238.5L244.7 248.6M242.4 238.9L314.9 249.5M312.6 240L390.3 251M394.1 242.6L477.9 254.1L568.3 266.4M475.3 245L565.4 257L663 270M569.5 248.9L667.4 261.6L773.6 275.4M664.5 252.8L770.4 266.1L885.8 280.7M767.4 257.4L882.5 271.5L1008.3 287M1010.1 270.3L1148.4 286.4M1153.9 278.8L1306.9 296.3M1302.7 287.5L1471.8 306.4M1298.8 279.2L1467.4 297.6M1473.7 290.3L1662.4 310.4M112.5 124.8L175.9 130.9L243.7 137.4M477.6 123.3L567.8 130.5L665.3 138.3M905.2 126.5L1007.4 133.5M1257.5 124.5L1348.9 130L1445.9 135.9"/>
<path stroke-opacity="0.75" d="M-2.8 145.1L41.8 138.9M177.5 150.1L228.9 141.7L276.3 134M374.6 153.8L427.8 143.3L476 133.9M609.7 149.9L657.7 138.1M-6.1 310.7L136.5 274.8M150.1 289.5L274.1 256.4M300.7 277L411.2 245M455.6 260.8L550.6 230.5M816 152.8L857.9 138.9M482 274.3L580.4 240.6M598.5 245.2L679.2 216.6M617.1 249.8L698.1 220.1M635.1 255.1L716.3 224.1M654.9 260.1L736.2 227.7M675.3 265.2L756.7 231.5M693 272L775.1 236.4M713.8 278L795.6 240.9M817.8 245L882.7 214.2M1066.6 136.3L1093.2 123M864.1 253.6L927.1 220.4M887.1 258.6L949.1 224.1M912 263.3L972.6 227.4M935.5 269.3L995.2 231.7M961.9 274.3L1019.9 235.2M990.2 278.6L1045.8 238.4M1023.7 279.5L1075.5 238.9M1059.1 278.9L1106.6 238.5M1094.4 278.4L1137.6 238.1M1162.9 279.4L1198 238.9M1198 278.8L1228.9 238.5M1233 278.3L1259.7 238M1266.8 279.8L1289.5 239.2M1301.8 279.3L1320.3 238.8M1336.7 278.7L1350.9 238.4M1371.5 278.2L1381.5 238M1405.9 279.7L1411.8 239.2M1440.6 279.1L1442.4 238.7M1466.4 127.3L1465.7 114.4M1509.8 278.1L1503.3 237.9M1537.5 252.1L1528.8 219.4M1569.1 251.4L1558.1 221.3M1612 275.1L1597.2 243.4L1584.9 217.3M1636.2 257.5L1621.4 231.6M1653.3 124L1649.1 120.1L1645 116.3M-4.9 250.2L51.1 259.8M-6.8 239.1L49.1 248.4L108.6 258.2M109.9 237.8L173.3 247.6L241.1 258.1M244.7 248.6L317.4 259.5M314.9 249.5L392.8 260.8L476.5 272.9M390.3 251L473.8 262.7L563.9 275.4M568.3 266.4L666 279.8M663 270L768.8 284M773.6 275.4L889.3 290.3M885.8 280.7L1012 296.6M1008.3 287L1146.4 303.9M1148.4 286.4L1300.8 304.2M1306.9 296.3L1476.5 315.6M1471.8 306.4L1660.3 327.4M1467.4 297.6L1655.4 318M243.7 137.4L316.2 144.3L394 151.8M665.3 138.3L771.2 146.7M1007.4 133.5L1117.5 141.1L1236.5 149.3M1445.9 135.9L1549.1 142.1L1658.9 148.7"/>
<path stroke-opacity="0.83" d="M-6 180L60.8 169.1L121.7 159.2L177.5 150.1M-2.7 227.7L92.4 209.1L175.9 192.7L249.8 178.2L315.6 165.3L374.6 153.8M-7.4 301.7L130.6 267.7L244.9 239.6L341 216L423 195.8L493.7 178.4L555.4 163.2L609.7 149.9M-4.6 320.3L143.1 282M149.4 299.5L278.9 264M156.2 308L289.1 270.5M312.7 283.8L425.5 250.1M325.2 290.9L440.3 255.3M338.2 298.2L455.6 260.8M645.5 209L711.6 187.2L767.7 168.7L816 152.8M499 280.4L598.5 245.2M516.6 286.7L617.1 249.8M533.8 293.8L635.1 255.1M552.8 300.6L654.9 260.1M572.6 307.8L675.3 265.2M736.4 283.7L817.8 245M784 295.8L864.1 253.6M808 302.8L887.1 258.6M834 309.4L912 263.3M1467.3 142.4L1466.4 127.3M1548.4 293.5L1537.5 252.1M1582.8 288.7L1569.1 251.4M1653.9 288.4L1636.2 257.5M-6.2 273.9L49.8 284.2L109.3 295.2M-2.8 262.1L53.3 272L113.1 282.6L176.8 293.9M51.1 259.8L110.7 270L174.2 280.8L242.1 292.4M108.6 258.2L171.9 268.6L239.6 279.8L312 291.8M241.1 258.1L313.5 269.3L391.3 281.3L475 294.2M317.4 259.5L395.4 271.2L479.4 283.8L569.9 297.3M476.5 272.9L566.8 286M563.9 275.4L661.3 289.2M666 279.8L772.2 294.3M768.8 284L884.1 299.4M889.3 290.3L1015.8 306.7M1012 296.6L1150.5 314M1146.4 303.9L1298.7 322.7M-3.3 157.1L52.7 163.8L112.3 171L175.8 178.6L243.6 186.7L316.2 195.4L394 204.7L477.8 214.8L568.1 225.6L665.8 237.3L771.9 250L887.4 263.8L1013.6 278.9L1152.3 295.5M1300.8 304.2L1469.7 324M1476.5 315.6L1665.5 337.2M394 151.8L477.7 159.8L567.9 168.5L665.5 177.8L771.5 188L886.8 199.1L1012.9 211.2L1151.3 224.4L1304 239.1L1473.1 255.3L1661.6 273.4M771.2 146.7L886.4 156L1012.4 166L1150.7 177.1L1303.2 189.3L1472.1 202.8L1660.4 217.9M1236.5 149.3L1365.6 158.1L1506.1 167.8L1659.6 178.3"/>
<path stroke-opacity="0.92" d="M-3.1 330.3L150.1 289.5M-12.2 343.8L149.4 299.5M164 316.7L300.7 277M172.2 325.9L312.7 283.8M180.7 335.5L325.2 290.9M189.7 345.6L338.2 298.2M566.4 235.1L645.5 209M358.6 316.4L482 274.3M373.3 324.8L499 280.4M388.8 333.7L516.6 286.7M404 343.3L533.8 293.8M588.4 317.3L693 272M608.7 325.6L713.8 278M631.1 333.8L736.4 283.7M1035.7 151.7L1066.6 136.3M678.8 351.2L784 295.8M857.9 318.2L935.5 269.3M886 325.3L961.9 274.3M917.1 331.4L990.2 278.6M955.5 332.8L1023.7 279.5M996.7 332L1059.1 278.9M1037.6 331.3L1094.4 278.4M1116.7 332.6L1162.9 279.4M1157.4 331.9L1198 278.8M1198.1 331.2L1233 278.3M1237 333.2L1266.8 279.8M1277.6 332.5L1301.8 279.3M1318 331.7L1336.7 278.7M1358.3 331L1371.5 278.2M1398 333L1405.9 279.7M1438.3 332.3L1440.6 279.1M1518.3 330.8L1509.8 278.1M1562.7 347.7L1548.4 293.5M1600.2 336.3L1582.8 288.7M1630.3 314.1L1612 275.1M-5.5 317.8L50.6 329.5M-7.8 301.5L48.1 312.7L107.6 324.6M-4.1 287.7L52.1 298.5L111.8 309.9L175.4 322.1M109.3 295.2L172.7 306.9L240.5 319.4M176.8 293.9L244.8 306L317.6 318.9M242.1 292.4L314.7 304.8L392.6 318.2M312 291.8L389.7 304.6L473.2 318.4M475 294.2L565.2 308.2L662.8 323.2M569.9 297.3L667.9 312L774.3 327.9M566.8 286L664.5 300.2L770.5 315.6L886 332.4M661.3 289.2L767.1 304.1L882.2 320.3M772.2 294.3L887.8 310.2L1014.2 327.5M884.1 299.4L1010.1 316.1M1015.8 306.7L1154.7 324.7M1150.5 314L1303.2 333.3M1152.3 295.5L1305.1 313.9L1474.6 334.2M1469.7 324L1658 346"/>
<path stroke-opacity="1.00" d="M-10.8 355.1L156.2 308M-9.3 367L164 316.7M-7.8 379.7L172.2 325.9M-6.1 393.2L180.7 335.5M-4.4 407.5L189.7 345.6M-2.5 422.7L198.6 356.4L350.9 306.2L470.3 266.8L566.4 235.1M-13.8 443.5L199.4 370.7L358.6 316.4M-12.1 461.3L209.7 382.7L373.3 324.8M-10.3 480.3L220.7 395.4L388.8 333.7M-8.3 500.8L231.6 409.1L404 343.3M-6.2 522.8L243.9 423.4L420.9 353.1L552.8 300.6M-4 546.7L256.9 438.6L438.7 363.3L572.6 307.8M-18.4 580L260.4 459.3L450.5 377L588.4 317.3M-16.5 608.9L274.2 477.2L469.1 388.9L608.7 325.6M-14.3 640.6L289.9 496L489.7 401L631.1 333.8M-11.9 675.5L306.6 516.2L511.5 413.8L654.4 342.3L759.8 289.7L840.6 249.3L904.6 217.3L956.6 191.3L999.6 169.8L1035.7 151.7M-9.3 714L324.6 537.9L534.6 427.3L678.8 351.2M-6.4 756.7L343.3 561.8L558 442.1L703.2 361.2L808 302.8M-3.2 804.4L364.3 587.1L583.9 457.3L729.9 370.9L834 309.4M-24.2 873.7L374.6 622.5L604.2 478L753.3 384.1L857.9 318.2M-21.7 936.6L399.2 653.2L633.4 495.4L782.7 395L886 325.3M9.3 988.3L438.1 678L670.8 509.6L816.9 403.9L917.1 331.4M98.2 1003.1L505.5 684.7L724.7 513.2L861.8 406.1L955.5 332.8M214 997.5L585.1 682L785.4 511.6L910.8 405L996.7 332M328.6 992.1L664.2 679.3L845.8 510.1L959.6 404L1037.6 331.3M536.7 1001.3L812 683.9L960.4 512.8L1053.2 405.8L1116.7 332.6M650 995.8L890.5 681.2L1020.4 511.2L1101.7 404.8L1157.4 331.9M762.1 990.4L968.3 678.5L1080 509.6L1150 403.8L1198.1 331.2M861.7 1005.1L1040 685.8L1136 514L1196 406.6L1237 333.2M973.6 999.6L1117.8 683.1L1195.6 512.4L1244.3 405.6L1277.6 332.5M1084.3 994.1L1195 680.4L1254.8 510.8L1292.3 404.5L1318 331.7M1193.9 988.7L1271.6 677.8L1313.7 509.2L1340.2 403.5L1358.3 331M1299.3 1003.4L1346.2 685L1371.4 513.5L1387.2 406.4L1398 333M1408.7 997.9L1422.7 682.3L1430.3 512L1435 405.3L1438.3 332.3M1516.9 992.4L1498.7 679.6L1488.8 510.4L1482.6 404.3L1478.3 331.6L1475.3 278.6L1472.9 238.3L1471 206.6L1469.6 181.1L1468.3 160L1467.3 142.4M1624 987L1574.1 677L1547 508.8L1530 403.3L1518.3 330.8M1654.7 696.3L1610.4 528.4L1582.2 421.6L1562.7 347.7M1654.9 485.5L1623.2 399.1L1600.2 336.3M1653.5 363.5L1630.3 314.1M-17.4 909.2L-8.3 914.1L0.9 919.1L10.1 924.1L19.5 929.1L29 934.2L38.6 939.3L48.2 944.5L58 949.8L67.9 955.1L77.9 960.5L87.9 965.9L98.1 971.4L108.4 976.9L118.9 982.5L129.4 988.2L140 993.9M-7.1 815.7L12.2 825.1L32.1 834.6L52.3 844.4L73 854.4L94.1 864.6L115.8 875.1L137.9 885.7L160.5 896.7L183.7 907.9L207.4 919.3L231.7 931.1L256.6 943.1L282 955.4L308.1 968L334.9 980.9L362.4 994.2M-12 732.8L16.5 745.3L45.9 758.2L76.3 771.5L107.6 785.2L140 799.4L173.6 814.1L208.2 829.3L244.2 845.1L281.4 861.4L319.9 878.3L359.9 895.9L401.5 914.1L444.6 933L489.5 952.7L536.1 973.1L584.7 994.4M-3.8 669.1L31.9 683.4L69.1 698.4L107.8 713.9L148.1 730.1L190.1 747L234 764.6L279.8 783L327.7 802.2L377.8 822.3L430.4 843.4L485.5 865.6L543.4 888.8L604.2 913.2L668.3 939L735.8 966.1L807.2 994.7M-8.2 610.7L34 626.3L78.2 642.7L124.6 659.9L173.3 677.9L224.5 696.9L278.4 716.8L335.3 737.9L395.3 760.1L458.7 783.6L525.8 808.4L597.1 834.8L672.7 862.8L753.3 892.7L839.3 924.5L931.2 958.5L1029.6 995M-11.9 561L35.2 577.2L84.7 594.2L137 612.2L192.3 631.1L250.7 651.2L312.7 672.5L378.4 695.1L448.4 719.1L522.9 744.7L602.5 772.1L687.7 801.3L779.1 832.7L877.4 866.5L983.4 903L1098.1 942.4L1222.6 985.1M-5.4 521.2L46.4 537.8L101.2 555.4L159.4 574.1L221.1 593.8L286.9 614.9L357 637.4L432 661.4L512.3 687.2L598.6 714.8L691.4 744.5L791.7 776.7L900.3 811.5L1018.3 849.3L1147.1 890.6L1288 935.7L1443.1 985.4M-8.8 483.5L47.2 500.4L106.8 518.3L170.4 537.4L238.2 557.7L310.9 579.6L388.9 603L472.8 628.2L563.4 655.3L661.3 684.8L767.7 716.7L883.6 751.5L1010.3 789.6L1149.5 831.4L1303.2 877.5L1473.5 928.6L1663.5 985.7M-3.3 452.9L53 468.8L113 485.7L176.9 503.8L245.2 523.1L318.3 543.7L396.8 565.9L481.3 589.7L572.5 615.5L671.1 643.4L778.3 673.6L895.1 706.6L1022.8 742.7L1163.2 782.4L1318.2 826.1L1490.1 874.7L1682 928.9M-6.5 423.3L49.7 438.3L109.4 454.2L173 471.1L241 489.3L313.8 508.7L391.9 529.5L475.9 551.9L566.6 576.1L664.7 602.3L771.2 630.7L887.3 661.6L1014.2 695.5L1153.7 732.6L1307.5 773.7L1478.2 819.2L1668.5 869.9M-9.3 397L46.6 411.1L106.1 426.1L169.5 442.1L237.2 459.2L309.7 477.5L387.4 497.1L471.1 518.3L561.3 541.1L658.9 565.7L764.9 592.5L880.3 621.6L1006.6 653.5L1145.2 688.5L1298 727.1L1467.5 769.9L1656.5 817.6M-7.2 353.6L48.8 366.4L108.3 380L171.8 394.5L239.6 410L312.2 426.6L390.1 444.4L473.9 463.5L564.3 484.1L662 506.5L768.2 530.7L883.8 557.1L1010.2 586L1149.1 617.7L1302.2 652.6L1472 691.4L1661.4 734.7M-3 335.6L53.2 347.9L113 360.9L176.8 374.8L244.9 389.7L317.9 405.6L396.1 422.6L480.4 441L571.2 460.8L669.6 482.2L776.3 505.5L892.7 530.8L1019.9 558.5L1159.6 589L1313.9 622.6L1484.9 659.9L1675.7 701.5M50.6 329.5L110.2 341.9L173.8 355.2L241.6 369.3L314.3 384.5L392.3 400.7L476.2 418.2L566.7 437.1L664.6 457.5L770.9 479.6L886.7 503.8L1013.3 530.1L1152.3 559.1L1305.7 591.1L1475.8 626.5L1665.4 666.1M107.6 324.6L171 337.2L238.6 350.7L311.1 365.2L388.8 380.7L472.4 397.4L562.5 415.4L660.1 434.9L765.9 456L881.2 479.1L1007.3 504.2L1145.7 531.9L1298.3 562.4L1467.5 596.1L1656.1 633.8M175.4 322.1L243.3 335.1L316.1 349.1L394.1 364L478.1 380.1L568.7 397.5L666.7 416.3L773.2 436.7L889.1 458.9L1015.9 483.2L1155.1 509.9L1308.6 539.3L1478.9 572L1668.8 608.4M240.5 319.4L313 332.7L390.8 347.1L474.5 362.5L564.8 379.1L662.5 397.1L768.5 416.7L884 437.9L1010.2 461.2L1148.8 486.8L1301.7 514.9L1471.1 546.2L1660 581M317.6 318.9L395.7 332.8L479.8 347.7L570.5 363.8L668.6 381.2L775.1 400.1L891.1 420.7L1018 443.2L1157.4 468L1311.1 495.2L1481.6 525.5L1671.7 559.2M392.6 318.2L476.4 332.5L566.8 348L664.5 364.7L770.7 382.9L886.3 402.7L1012.7 424.3L1151.5 448L1304.6 474.2L1474.3 503.3L1663.4 535.6M473.2 318.4L563.3 333.3L660.8 349.4L766.6 366.9L881.8 385.9L1007.7 406.7L1146 429.6L1298.5 454.7L1467.5 482.7L1655.8 513.8M-3.7 229.6L52.4 238.6L112 248.1L175.6 258.2L243.5 269.1L316.1 280.7L394.1 293.1L478 306.5L568.4 321L666.3 336.6L772.6 353.6L888.3 372.1L1014.9 392.3L1153.8 414.5L1307.1 438.9L1477 466.1L1666.4 496.3M662.8 323.2L768.7 339.6L884 357.4L1010.2 376.9L1148.6 398.3L1301.3 421.9L1470.5 448.1L1659.1 477.2M774.3 327.9L890.1 345.3L1016.8 364.2L1155.9 385L1309.3 408L1479.4 433.5L1669 461.9M886 332.4L1012.3 350.7L1150.9 370.8L1303.8 393L1473.2 417.6L1662.1 445M882.2 320.3L1008.1 338L1146.2 357.5L1298.6 378.9L1467.4 402.7L1655.6 429.2M1014.2 327.5L1152.9 346.4L1306 367.4L1475.6 390.6L1664.7 416.5M1010.1 316.1L1148.5 334.6L1301 354.9L1470.1 377.4L1658.5 402.4M1154.7 324.7L1307.9 344.5L1477.7 366.5L1667 391M1303.2 333.3L1472.4 354.6L1661.1 378.4M1298.7 322.7L1467.4 343.4L1655.5 366.5M1474.6 334.2L1663.4 356.8"/></g>
  <line x1="-157" y1="338.5" x2="1975" y2="850" stroke="#a83a4a" stroke-width="1.5"/>
  <line x1="243.5" y1="1191" x2="1334.5" y2="66.6" stroke="#6a9a2e" stroke-width="1.5"/>
  <defs>
   <radialGradient id="sph" gradientUnits="userSpaceOnUse" cx="810" cy="520" r="230" fx="795" fy="510">
    <stop offset="0" stop-color="#b9b9b9"/><stop offset="0.45" stop-color="#adadad"/><stop offset="0.75" stop-color="#9d9d9d"/><stop offset="1" stop-color="#8a8a8a"/>
   </radialGradient>
   <radialGradient id="shade" gradientUnits="userSpaceOnUse" cx="760" cy="470" r="300">
    <stop offset="0" stop-color="#2a2520" stop-opacity="0"/><stop offset="0.7" stop-color="#2a2520" stop-opacity="0"/><stop offset="0.9" stop-color="#2a2520" stop-opacity="0.2"/><stop offset="1" stop-color="#2a2520" stop-opacity="0.45"/>
   </radialGradient>
   <linearGradient id="holer" x1="0" y1="0" x2="0.6" y2="1"><stop offset="0" stop-color="#6a6a6a"/><stop offset="0.5" stop-color="#858585"/><stop offset="1" stop-color="#8e8e8e"/></linearGradient>
   <linearGradient id="tor1" x1="0" y1="0" x2="0.2" y2="1"><stop offset="0" stop-color="#b0b0b0"/><stop offset="0.55" stop-color="#a2a2a2"/><stop offset="1" stop-color="#747474"/></linearGradient>
   <linearGradient id="ringg" x1="0.2" y1="0" x2="0.5" y2="1"><stop offset="0" stop-color="#9c9c9c"/><stop offset="0.5" stop-color="#a2a2a2"/><stop offset="1" stop-color="#b0b0b0"/></linearGradient>
   <linearGradient id="ringr" x1="0" y1="0" x2="1" y2="1"><stop offset="0" stop-color="#a8a8a8"/><stop offset="0.6" stop-color="#9a9a9a"/><stop offset="1" stop-color="#7e7e7e"/></linearGradient>
  </defs>
  <!-- back top torus -->
  <ellipse cx="871" cy="414" rx="68" ry="25" transform="rotate(11 871 414)" fill="url(#tor1)" stroke="#444" stroke-width="0.8"/>
  <ellipse cx="869" cy="408" rx="62" ry="16" transform="rotate(11 869 408)" fill="#a9a9a9" opacity="0.6"/>
  <!-- sphere -->
  <circle cx="840" cy="577" r="163" fill="url(#sph)"/>
  <circle cx="840" cy="577" r="163" fill="url(#shade)"/>
  <ellipse cx="855" cy="425" rx="60" ry="22" fill="#9a9a9a" opacity="0.35"/>
  <!-- upper-left torus -->
  <g transform="rotate(-48 710 478)">
   <ellipse cx="710" cy="478" rx="75" ry="15.5" fill="#7e7e7e" stroke="#3e3e3e" stroke-width="0.8"/>
   <ellipse cx="709" cy="474.5" rx="73" ry="11.5" fill="#a9a9a9"/>
   <ellipse cx="709" cy="471" rx="66" ry="5" fill="#b2b2b2" opacity="0.6"/>
  </g>
  <!-- front-top torus -->
  <g><ellipse cx="820" cy="485" rx="43" ry="36.5" fill="url(#ringg)" stroke="#3c3c3c" stroke-width="1"/><ellipse cx="820" cy="486.2" rx="35.0" ry="29.0" fill="none" stroke="#bdbdbd" stroke-opacity="0.45" stroke-width="6.1"/><ellipse cx="820" cy="482.5" rx="29.7" ry="23.7" fill="#6a6a6a"/><ellipse cx="820" cy="485.3" rx="27" ry="21.5" fill="url(#sph)" stroke="#3a3a3a" stroke-width="1"/></g>
  <!-- right torus -->
  <g transform="rotate(-25 961 512)"><ellipse cx="961" cy="512" rx="42" ry="62" fill="url(#ringr)" stroke="#3c3c3c" stroke-width="1"/><ellipse cx="961" cy="513.6" rx="29.2" ry="51.8" fill="none" stroke="#bdbdbd" stroke-opacity="0.45" stroke-width="9.7"/><ellipse cx="961" cy="510.5" rx="18.2" ry="45.7" fill="#5e5e5e"/><ellipse cx="961" cy="514.5" rx="16.5" ry="41.5" fill="url(#holer)" stroke="#3a3a3a" stroke-width="1"/></g>
  <!-- bottom-left torus -->
  <g transform="rotate(-20 695 636.5)"><ellipse cx="695" cy="636.5" rx="24" ry="44.4" fill="url(#ringr)" stroke="#3c3c3c" stroke-width="1"/><ellipse cx="695" cy="637.9" rx="17.9" ry="35.7" fill="none" stroke="#bdbdbd" stroke-opacity="0.45" stroke-width="4.6"/><ellipse cx="691" cy="633.5" rx="13.0" ry="29.7" fill="#626262"/><ellipse cx="691" cy="636.6" rx="11.8" ry="27" fill="url(#holer)" stroke="#3a3a3a" stroke-width="1"/></g>
  <!-- big front torus -->
  <g><ellipse cx="836" cy="642" rx="81.5" ry="74" fill="url(#ringg)" stroke="#3c3c3c" stroke-width="1.3"/><ellipse cx="836" cy="644.4" rx="65.5" ry="59.0" fill="none" stroke="#bdbdbd" stroke-opacity="0.45" stroke-width="12.2"/><ellipse cx="836" cy="640.5" rx="54.5" ry="48.4" fill="#6a6a6a"/><ellipse cx="836" cy="644.6" rx="49.5" ry="44" fill="url(#sph)" stroke="#3a3a3a" stroke-width="1"/></g>
  <!-- outline -->
  <circle cx="840" cy="577" r="163.3" fill="none" stroke="#f4a030" stroke-width="2"/>
  <!-- 3d cursor -->
  <g transform="translate(839.3 576.8)">
   <path d="M0 -18V-6M0 6V18M-18 -4L-6 -1.5M6 1.5L18 4M-6 7L6 -7" stroke="#111" stroke-width="1"/>
   <circle r="10" fill="none" stroke="#fff" stroke-width="2"/>
   <circle r="10" fill="none" stroke="#d22" stroke-width="2" stroke-dasharray="3.9 3.9"/>
   <circle r="3" fill="#f49a1a" stroke="#222" stroke-width="0.5"/>
  </g>
 </svg>
 <div class="a" style="left:0;top:0;width:1651px;height:26px;background:#393939"></div>
 <!-- tool header -->
 <div class="btn" style="left:9px;top:3px;width:32px;height:21px;background:#2a2a2a"></div>
 <svg class="a" style="left:12px;top:5px" width="28" height="18" viewBox="0 0 28 18">
  <path d="M2 8.5h12M2 13.5h12M5 6l-2 10M11 6l-2 10" stroke="#ddd" stroke-width="1.4" fill="none"/>
  <circle cx="11" cy="5" r="3.6" fill="#ddd"/>
  <path d="M19 8l3 3 3-3" stroke="#ccc" stroke-width="1.3" fill="none"/>
 </svg>
 <div class="a" style="left:54px;top:2px;width:23px;height:23px;border:1.5px dashed #f0a020;border-radius:2px"></div>
 <svg class="a" style="left:57px;top:5px" width="18" height="18" viewBox="0 0 18 18"><path d="M5 3.5L14 9.5 9.6 10.3 7.6 14.5Z" fill="#e0e0e0"/></svg>
 <div class="a" style="left:92px;top:4px;width:99px;height:20px;background:#545454;border-radius:4px;overflow:hidden">
  <div class="a" style="left:0;top:0;width:19px;height:20px;background:#4772b3"></div>
  <div class="a" style="left:19px;top:0;width:1px;height:20px;background:#3a3a3a"></div>
  <div class="a" style="left:39px;top:0;width:1px;height:20px;background:#3a3a3a"></div>
  <div class="a" style="left:59px;top:0;width:1px;height:20px;background:#3a3a3a"></div>
  <div class="a" style="left:79px;top:0;width:1px;height:20px;background:#3a3a3a"></div>
  <div class="a" style="left:3px;top:3px;width:13px;height:13px;border:1.5px dashed #fff"></div>
  <div class="a" style="left:23px;top:3px;width:9px;height:9px;background:#ddd"></div><div class="a" style="left:27px;top:7px;width:9px;height:9px;background:#ddd"></div>
  <div class="a" style="left:43px;top:7px;width:9px;height:9px;border:1.3px dashed #ddd"></div><div class="a" style="left:47px;top:3px;width:9px;height:9px;background:#ddd"></div>
  <div class="a" style="left:63px;top:3px;width:10px;height:10px;border:2.5px solid #ddd"></div><div class="a" style="left:67px;top:7px;width:10px;height:10px;border:2.5px solid #ddd"></div>
  <div class="a" style="left:83px;top:3px;width:13px;height:13px;border:1.3px dashed #ddd"></div><div class="a" style="left:86px;top:6px;width:7px;height:7px;background:#ddd"></div>
 </div>
 <div class="btn" style="left:695px;top:3px;width:82px;height:21px;background:#282828"></div>
 <svg class="a" style="left:700px;top:5px" width="18" height="18" viewBox="0 0 18 18"><path d="M4 2v12h12M4 14l9-7" stroke="#ddd" stroke-width="1.3" fill="none"/><path d="M2 4l2-2 2 2M14 12l2 2-2 2" stroke="#ddd" stroke-width="1.3" fill="none"/></svg>
 <div class="t" style="left:722px;top:7px;color:#e0e0e0">Global</div>
 <svg class="a" style="left:765px;top:11px" width="9" height="6" viewBox="0 0 9 6"><path d="M1 1l3.5 3.5L8 1" stroke="#ccc" stroke-width="1.3" fill="none"/></svg>
 <div class="btn" style="left:784px;top:3px;width:32px;height:21px;background:#282828"></div>
 <svg class="a" style="left:787px;top:5px" width="28" height="18" viewBox="0 0 28 18"><path d="M2 6V2h4M12 2h4v4M16 12v4h-4M6 16H2v-4" stroke="#ddd" stroke-width="1.3" fill="none"/><circle cx="9" cy="9" r="2" fill="#ddd"/><path d="M19 8l3 3 3-3" stroke="#ccc" stroke-width="1.3" fill="none"/></svg>
 <div class="btn" style="left:823px;top:3px;width:52px;height:21px;background:#282828"></div>
 <div class="a" style="left:823px;top:3px;width:19px;height:21px;background:#4772b3;border-radius:4px 0 0 4px"></div>
 <svg class="a" style="left:824px;top:5px" width="18" height="18" viewBox="0 0 18 18"><path d="M5 9a5 5 0 1 1 8 4" stroke="#fff" stroke-width="2.6" fill="none"/><path d="M3 15l3-3" stroke="#fff" stroke-width="1.3" stroke-dasharray="1.5 1.5"/></svg>
 <div class="a" style="left:846px;top:8px;width:12px;height:12px;background:#ddd"></div>
 <svg class="a" style="left:863px;top:11px" width="9" height="6" viewBox="0 0 9 6"><path d="M1 1l3.5 3.5L8 1" stroke="#ccc" stroke-width="1.3" fill="none"/></svg>
 <div class="btn" style="left:882px;top:3px;width:52px;height:21px;background:#282828;border-color:#262626"></div>
 <div class="a" style="left:883px;top:4px;width:19px;height:19px;background:#4a4a4a;border-radius:3px 0 0 3px"></div>
 <svg class="a" style="left:884px;top:5px" width="18" height="18" viewBox="0 0 18 18"><circle cx="9" cy="9" r="6" stroke="#888" stroke-width="1.2" fill="none"/><circle cx="9" cy="9" r="2" fill="#999"/></svg>
 <svg class="a" style="left:905px;top:5px" width="28" height="18" viewBox="0 0 28 18"><path d="M1 16C5 16 5 3 8 3s3 13 7 13" stroke="#aaa" stroke-width="1.3" fill="none"/><path d="M19 8l3 3 3-3" stroke="#777" stroke-width="1.1" fill="none"/></svg>
 <div class="btn" style="left:1580px;top:3px;width:64px;height:21px;background:#282828"></div>
 <div class="t" style="left:1588px;top:7px;color:#e0e0e0">Options</div>
 <svg class="a" style="left:1632px;top:11px" width="9" height="6" viewBox="0 0 9 6"><path d="M1 1l3.5 3.5L8 1" stroke="#ccc" stroke-width="1.3" fill="none"/></svg>
 <!-- header row 2 -->
 <div class="hb" style="left:10px;top:30px;width:113px;height:21px"></div>
 <svg class="a" style="left:14px;top:32px" width="18" height="18" viewBox="0 0 18 18"><path d="M1 5V1h4M13 1h4v4M17 13v4h-4M5 17H1v-4" stroke="#ccc" stroke-width="1.3" fill="none"/><rect x="4" y="4" width="10" height="10" fill="#ddd"/></svg>
 <div class="t" style="left:36px;top:34px;color:#dcdcdc">Object Mode</div>
 <svg class="a" style="left:111px;top:38px" width="9" height="6" viewBox="0 0 9 6"><path d="M1 1l3.5 3.5L8 1" stroke="#ccc" stroke-width="1.3" fill="none"/></svg>
 <div class="hb" style="left:130px;top:30px;width:40px;height:21px"></div><div class="t" style="left:137px;top:34px">View</div>
 <div class="hb" style="left:172px;top:30px;width:46px;height:21px"></div><div class="t" style="left:178px;top:34px">Select</div>
 <div class="hb" style="left:220px;top:30px;width:33px;height:21px"></div><div class="t" style="left:226px;top:34px">Add</div>
 <div class="hb" style="left:255px;top:30px;width:48px;height:21px"></div><div class="t" style="left:261px;top:34px">Object</div>
 <!-- right header icons -->
 <div class="hb" style="left:1386px;top:30px;width:32px;height:21px"></div>
 <svg class="a" style="left:1387px;top:31px" width="30" height="20" viewBox="0 0 30 20"><path d="M3 9l9 3-4 1-2 4z" fill="#ddd"/><ellipse cx="11" cy="6" rx="5" ry="3.4" fill="none" stroke="#ddd" stroke-width="1.3"/><circle cx="11" cy="6" r="1.6" fill="#ddd"/><path d="M20 9l3 3 3-3" stroke="#ccc" stroke-width="1.3" fill="none"/></svg>
 <div class="hb" style="left:1423px;top:30px;width:42px;height:21px"></div>
 <div class="a" style="left:1423px;top:30px;width:20px;height:21px;background:#4772b3;border-radius:4px 0 0 4px"></div>
 <svg class="a" style="left:1424px;top:31px" width="40" height="20" viewBox="0 0 40 20"><circle cx="5" cy="15" r="2" fill="none" stroke="#fff" stroke-width="1.2"/><path d="M6.5 13.5C8 9 11 6 16 5" stroke="#fff" stroke-width="1.3" fill="none"/><path d="M12 4l4 1-2 3" stroke="#fff" stroke-width="1.3" fill="none"/><path d="M27 9l3 3 3-3" stroke="#ccc" stroke-width="1.3" fill="none"/></svg>
 <div class="hb" style="left:1470px;top:30px;width:42px;height:21px"></div>
 <div class="a" style="left:1470px;top:30px;width:20px;height:21px;background:#4772b3;border-radius:4px 0 0 4px"></div>
 <svg class="a" style="left:1471px;top:31px" width="40" height="20" viewBox="0 0 40 20"><circle cx="7" cy="12" r="5" fill="none" stroke="#fff" stroke-width="1.3"/><circle cx="11" cy="8" r="5" fill="#ddd"/><path d="M27 9l3 3 3-3" stroke="#ccc" stroke-width="1.3" fill="none"/></svg>
 <div class="hb" style="left:1519px;top:30px;width:20px;height:20px;background:#4a4a4a"></div>
 <svg class="a" style="left:1520px;top:32px" width="18" height="18" viewBox="0 0 18 18"><rect x="2.5" y="5.5" width="10" height="10" fill="none" stroke="#ccc" stroke-width="1.2"/><path d="M5.5 5.5V2.5h10v10h-3" fill="none" stroke="#ccc" stroke-width="1.2"/></svg>
 <div class="hb" style="left:1545px;top:30px;width:100px;height:21px"></div>
 <div class="a" style="left:1546px;top:31px;width:78px;height:19px;background:#545454;border-radius:3px 0 0 3px"></div>
 <div class="a" style="left:1565px;top:30px;width:19px;height:21px;background:#4772b3"></div>
 <svg class="a" style="left:1546px;top:31px" width="80" height="20" viewBox="0 0 80 20"><circle cx="9" cy="10" r="6.5" fill="none" stroke="#ddd" stroke-width="1.2"/><ellipse cx="9" cy="10" rx="3" ry="6.5" fill="none" stroke="#ddd" stroke-width="1"/><path d="M2.5 10h13" stroke="#ddd" stroke-width="1"/>
 <circle cx="28.5" cy="10" r="7" fill="#fff"/>
 <circle cx="48" cy="10" r="6.5" fill="#888" stroke="#ddd" stroke-width="1.2"/><path d="M48 3.5A6.5 6.5 0 0 1 54.5 10H48Z" fill="#eee"/><path d="M48 10v6.5A6.5 6.5 0 0 1 41.5 10Z" fill="#ddd"/>
 <circle cx="67.5" cy="10" r="6.5" fill="#666" stroke="#ccc" stroke-width="1.2"/><path d="M63 8a5 5 0 0 1 5-3" stroke="#ddd" stroke-width="1.2" fill="none"/></svg>
 <svg class="a" style="left:1628px;top:38px" width="9" height="6" viewBox="0 0 9 6"><path d="M1 1l3.5 3.5L8 1" stroke="#ccc" stroke-width="1.3" fill="none"/></svg>
 <!-- overlay text -->
 <div class="t" style="left:70px;top:63px;color:#e8e8e8">User Perspective</div>
 <div class="t" style="left:70px;top:82px;color:#e8e8e8">(1) Collection | Sphere</div>
 <!-- toolbar -->
 <div class="a" style="left:9px;top:62px;width:42px;height:72px;background:#2b2b2b;border-radius:5px"></div>
 <div class="a" style="left:9px;top:62px;width:42px;height:35px;background:#4772b3;border-radius:5px 5px 0 0"></div>
 <div class="a" style="left:18px;top:69px;width:23px;height:21px;border:1.5px dashed #f0a020;border-radius:2px"></div>
 <svg class="a" style="left:22px;top:72px" width="16" height="16" viewBox="0 0 16 16"><path d="M5 3l8 6-4 0.7L7.3 14Z" fill="#e6e6e6"/></svg>
 <svg class="a" style="left:17px;top:105px" width="24" height="24" viewBox="0 0 24 24"><circle cx="12" cy="12" r="9" fill="none" stroke="#ddd" stroke-width="2" stroke-dasharray="4 3"/><circle cx="12" cy="12" r="9" fill="none" stroke="#c03030" stroke-width="2" stroke-dasharray="3 4" stroke-dashoffset="3.5"/><path d="M12 6v4M12 14v4M6 12h4M14 12h4" stroke="#ccc" stroke-width="1"/></svg>
 <div class="a" style="left:9px;top:140px;width:42px;height:144px;background:#2b2b2b;border-radius:5px"></div>
 <svg class="a" style="left:17px;top:146px" width="24" height="24" viewBox="0 0 24 24"><path d="M12 3v18M3 12h18" stroke="#ddd" stroke-width="1.3" stroke-dasharray="2 2"/><path d="M12 2l-3 4h6zM12 22l-3-4h6zM2 12l4-3v6zM22 12l-4-3v6z" fill="#ddd"/></svg>
 <svg class="a" style="left:17px;top:182px" width="24" height="24" viewBox="0 0 24 24"><path d="M5 9a8 8 0 0 1 14 0M19 15a8 8 0 0 1-14 0" stroke="#ddd" stroke-width="1.3" fill="none"/><path d="M12 9l3 3-3 3-3-3z" fill="#ddd"/><path d="M2 12l3-3 3 3zM16 12l3 3 3-3z" fill="#ddd"/></svg>
 <svg class="a" style="left:17px;top:219px" width="24" height="24" viewBox="0 0 24 24"><rect x="4" y="11" width="9" height="9" fill="#ddd"/><path d="M8 11V5h12v12h-7" fill="none" stroke="#ddd" stroke-width="1.2"/><path d="M13 11l6-6M15 5h4v4" stroke="#ddd" stroke-width="1.2" fill="none"/></svg>
 <svg class="a" style="left:17px;top:255px" width="24" height="24" viewBox="0 0 24 24"><circle cx="12" cy="12" r="9" fill="none" stroke="#ddd" stroke-width="1.3" stroke-dasharray="9 5"/><rect x="8" y="8" width="8" height="8" fill="#ddd"/><path d="M12 2l-2 3h4zM12 22l-2-3h4zM2 12l3-2v4zM22 12l-3-2v4z" fill="#ddd"/></svg>
 <div class="a" style="left:9px;top:291px;width:42px;height:71px;background:#2b2b2b;border-radius:5px"></div>
 <svg class="a" style="left:15px;top:297px" width="28" height="26" viewBox="0 0 28 26"><path d="M6 17L17 6l3 3L9 20l-4.5 1.5z" fill="#e6e6e6"/><path d="M16 7l3 3" stroke="#2b2b2b" stroke-width="1"/><path d="M3 21c4-5 8 3 12-1s6-3 8 0" stroke="#7fd1a8" stroke-width="1.5" fill="none"/></svg>
 <svg class="a" style="left:15px;top:332px" width="28" height="28" viewBox="0 0 28 28"><path d="M7 3v21h17" stroke="#e6e6e6" stroke-width="2.4" fill="none"/><path d="M4 8h3M4 12h3M4 16h3M4 20h3M11 24v3M15 24v3M19 24v3" stroke="#e6e6e6" stroke-width="1"/><path d="M9 9a14 14 0 0 1 13 13H9z" fill="#7fd1a8"/></svg>
 <!-- axis gizmo -->
 <svg class="a" style="left:1550px;top:60px" width="100" height="150" viewBox="1550 112 100 150">
  <line x1="1598.5" y1="157" x2="1598.5" y2="127" stroke="#3d8fff" stroke-width="2"/>
  <line x1="1598.5" y1="157" x2="1613.5" y2="143.4" stroke="#6c9c24" stroke-width="2"/>
  <line x1="1598.5" y1="157" x2="1629.4" y2="164" stroke="#ff3352" stroke-width="2"/>
  <circle cx="1568.4" cy="150.3" r="6.5" fill="#9e3441"/>
  <circle cx="1584" cy="171.2" r="6.5" fill="#8ad400"/>
  <circle cx="1598.5" cy="187.2" r="6.5" fill="#2e5f9e"/>
  <circle cx="1598.5" cy="127.2" r="8" fill="#3d8fff"/>
  <circle cx="1613.5" cy="143.4" r="8" fill="#6a8e26"/>
  <circle cx="1629.4" cy="164" r="8" fill="#ff3352"/>
  <text x="1598.5" y="131.5" font-size="11" text-anchor="middle" fill="#111" font-family="Liberation Sans">Z</text>
  <text x="1613.5" y="147.7" font-size="11" text-anchor="middle" fill="#111" font-family="Liberation Sans">Y</text>
  <text x="1629.4" y="168.3" font-size="11" text-anchor="middle" fill="#111" font-family="Liberation Sans">X</text>
 </svg>
 <!-- nav buttons -->
 <div class="a" style="left:1612px;top:147px;width:30px;height:30px;border-radius:15px;background:rgba(45,45,45,0.85)"></div>
 <div class="a" style="left:1612px;top:178px;width:30px;height:30px;border-radius:15px;background:rgba(45,45,45,0.85)"></div>
 <div class="a" style="left:1612px;top:211px;width:30px;height:30px;border-radius:15px;background:rgba(45,45,45,0.85)"></div>
 <div class="a" style="left:1612px;top:242px;width:30px;height:30px;border-radius:15px;background:rgba(45,45,45,0.85)"></div>
 <svg class="a" style="left:1612px;top:147px" width="30" height="126" viewBox="0 0 30 126">
  <circle cx="17" cy="12" r="5.5" fill="none" stroke="#e0e0e0" stroke-width="1.6"/><path d="M14.5 12h5M17 9.5v5" stroke="#e0e0e0" stroke-width="1.3"/><path d="M13 16l-5 5" stroke="#e0e0e0" stroke-width="2"/>
  <path transform="translate(-3 2) scale(1.1)" d="M9 43V37a1.2 1.2 0 0 1 2.4 0v4V35a1.2 1.2 0 0 1 2.4 0v6V34.5a1.2 1.2 0 0 1 2.4 0V41V36a1.2 1.2 0 0 1 2.4 0v8l2-2.5a1.3 1.3 0 0 1 2 1.6L18 50h-6c-2 0-3-2-3-4z" fill="#e8e8e8"/>
  <g transform="translate(0 4)"><circle cx="12" cy="71" r="3" fill="#e0e0e0"/><circle cx="18" cy="71" r="3" fill="#e0e0e0"/><rect x="9" y="74" width="11" height="8" fill="#e0e0e0"/><path d="M20 78l4-3v6z" fill="#e0e0e0"/></g>
  <g transform="translate(0 6)"><path d="M10 98h10l3 12H7z" fill="none" stroke="#e0e0e0" stroke-width="1.4"/><path d="M13.5 98l-1 12M16.5 98l1 12M8.5 102h13M7.8 106h14.4" stroke="#e0e0e0" stroke-width="1.2"/></g>
 </svg>
 <svg class="a" style="left:1642px;top:70px" width="8" height="12" viewBox="0 0 8 12"><path d="M6 2L2 6l4 4" stroke="#aaa" stroke-width="1.2" fill="none"/></svg>
</div>
<div id="outl" class="a">
<div class="a" style="left:0;top:0;width:346px;height:26px;background:#3d3d3d"></div>
<div class="btn" style="left:9px;top:3px;width:33px;height:21px;background:#282828"></div>
<svg class="a" style="left:13px;top:5px" width="28" height="18" viewBox="0 0 28 18"><rect x="2" y="1" width="5" height="3" fill="#ddd"/><path d="M3.5 4v11h3M3.5 9h3" stroke="#ddd" stroke-width="1.2" fill="none"/><rect x="7" y="7.5" width="7" height="3" fill="#ddd"/><rect x="7" y="12.5" width="7" height="3" fill="#ddd"/><path d="M18 8l3 3 3-3" stroke="#ccc" stroke-width="1.3" fill="none"/></svg>
<div class="btn" style="left:48px;top:3px;width:32px;height:21px;background:#282828"></div>
<svg class="a" style="left:51px;top:5px" width="28" height="18" viewBox="0 0 28 18"><rect x="5" y="1.5" width="10" height="10" fill="none" stroke="#ddd" stroke-width="1.3"/><path d="M3 4v10h10M1 6v10h10" stroke="#ddd" stroke-width="1" fill="none"/><path d="M6 10l3-4 2 2 1-1 2 3" fill="#ddd"/><circle cx="12" cy="4" r="1" fill="#ddd"/><path d="M18 8l3 3 3-3" stroke="#ccc" stroke-width="1.3" fill="none"/></svg>
<div class="a" style="left:104px;top:3px;width:114px;height:20px;background:#1d1d1d;border-radius:4px;border:1px solid #262626"></div>
<svg class="a" style="left:108px;top:5px" width="16" height="16" viewBox="0 0 16 16"><circle cx="9.5" cy="6.5" r="4.2" fill="none" stroke="#ddd" stroke-width="1.3"/><path d="M6.5 9.5L2 14" stroke="#ddd" stroke-width="1.4"/></svg>
<div class="btn" style="left:279px;top:3px;width:32px;height:21px;background:#282828"></div>
<svg class="a" style="left:283px;top:5px" width="28" height="18" viewBox="0 0 28 18"><path d="M1 2h13L9.3 8v7.5l-3-2V8Z" fill="none" stroke="#ddd" stroke-width="1.3"/><path d="M18 8l3 3 3-3" stroke="#ccc" stroke-width="1.3" fill="none"/></svg>
<div class="a" style="left:318px;top:3px;width:19px;height:21px;background:#545454;border-radius:4px"></div>
<svg class="a" style="left:319px;top:5px" width="18" height="18" viewBox="0 0 18 18"><rect x="2" y="5" width="10" height="3" fill="#ddd"/><rect x="2" y="9" width="10" height="7" fill="none" stroke="#ddd" stroke-width="1.2"/><circle cx="13" cy="5" r="3.6" fill="#545454" stroke="#ddd" stroke-width="1.1"/><path d="M13 3v4M11 5h4" stroke="#ddd" stroke-width="1.1"/></svg>
<div class="a" style="left:0;top:26px;width:346px;height:21px;background:#282828"></div>
<div class="a" style="left:0;top:47px;width:346px;height:21px;background:#2d2d2d"></div>
<div class="a" style="left:0;top:68px;width:346px;height:21px;background:#282828"></div>
<div class="a" style="left:0;top:89px;width:346px;height:21px;background:#2d2d2d"></div>
<div class="a" style="left:0;top:109px;width:346px;height:21px;background:#282828"></div>
<div class="a" style="left:0;top:130px;width:346px;height:21px;background:#2d2d2d"></div>
<div class="a" style="left:0;top:151px;width:346px;height:21px;background:#282828"></div>
<div class="a" style="left:0;top:172px;width:346px;height:21px;background:#2d2d2d"></div>
<div class="a" style="left:0;top:193px;width:346px;height:21px;background:#282828"></div>
<div class="a" style="left:0;top:214px;width:346px;height:21px;background:#2d2d2d"></div>
<div class="a" style="left:0;top:234px;width:346px;height:21px;background:#282828"></div>
<div class="a" style="left:0;top:255px;width:346px;height:21px;background:#2d2d2d"></div>
<div class="a" style="left:0;top:276px;width:346px;height:21px;background:#282828"></div>
<div class="a" style="left:0;top:297px;width:346px;height:21px;background:#2d2d2d"></div>
<div class="a" style="left:0;top:68.7px;width:346px;height:21px;background:#3b5689"></div>
<div class="a" style="left:30px;top:74px;width:1px;height:135px;background:#5a5a5a"></div>
<svg class="a" style="left:23px;top:31px" width="16" height="16" viewBox="0 0 16 16"><rect x="1.5" y="1.5" width="13" height="3.5" fill="#ddd"/><rect x="2.5" y="6.5" width="11" height="8" fill="#ddd"/><rect x="6" y="8.5" width="4" height="1.6" fill="#282828"/></svg>
<div class="t" style="left:46px;top:32px;color:#e0e0e0">Scene Collection</div>
<svg class="a" style="left:27px;top:53px" width="10" height="10" viewBox="0 0 10 10"><path d="M1 2h8L5 9Z" fill="#ccc"/></svg>
<div class="a" style="left:43px;top:49px;width:20px;height:19px;background:#3c3c3c;border-radius:4px;border:1px solid #555"></div>
<svg class="a" style="left:45px;top:51px" width="16" height="16" viewBox="0 0 16 16"><rect x="1.5" y="1.5" width="13" height="3.5" fill="#ddd"/><rect x="2.5" y="6.5" width="11" height="8" fill="#ddd"/><rect x="6" y="8.5" width="4" height="1.6" fill="#3c3c3c"/></svg>
<div class="t" style="left:67px;top:53px;color:#e0e0e0">Collection</div>
<div class="a" style="left:301px;top:53px;width:12px;height:12px;background:#e0e0e0;border-radius:2px"></div>
<svg class="a" style="left:301px;top:53px" width="12" height="12" viewBox="0 0 12 12"><path d="M2.5 6l2.5 2.5 4.5-5" stroke="#222" stroke-width="1.8" fill="none"/></svg>
<svg class="a" style="left:320px;top:52px" width="15" height="12" viewBox="0 0 15 12"><path d="M1 6C3.5 1.8 11.5 1.8 14 6 11.5 10.2 3.5 10.2 1 6Z" fill="none" stroke="#e0e0e0" stroke-width="1.6"/><circle cx="7.5" cy="6" r="2.2" fill="#e0e0e0"/></svg>
<svg class="a" style="left:49px;top:74px" width="8" height="10" viewBox="0 0 8 10"><path d="M1 1.5L7 5 1 8.5Z" fill="#ccc"/></svg>
<div class="a" style="left:63px;top:69px;width:20px;height:19px;background:#4a6696;border-radius:4px;border:1px solid #6a7fa6"></div>
<svg class="a" style="left:65px;top:71px" width="16" height="16" viewBox="0 0 16 16"><path d="M2 2.5H14L8 14.5Z" fill="none" stroke="#e8954a" stroke-width="2.4" stroke-linejoin="round"/></svg>
<div class="t" style="left:88px;top:73.5px;color:#f5a623">Sphere</div>
<svg class="a" style="left:147px;top:71px" width="16" height="16" viewBox="0 0 16 16"><path d="M3 3.5H13L8 13.5Z" fill="none" stroke="#19c9a0" stroke-width="1.3"/><rect x="1.5" y="2" width="3" height="3" fill="#282828" stroke="#19c9a0" stroke-width="1.1"/><rect x="11.5" y="2" width="3" height="3" fill="#282828" stroke="#19c9a0" stroke-width="1.1"/><rect x="6.5" y="12" width="3" height="3" fill="#282828" stroke="#19c9a0" stroke-width="1.1"/></svg>
<svg class="a" style="left:320px;top:73px" width="15" height="12" viewBox="0 0 15 12"><path d="M1 6C3.5 1.8 11.5 1.8 14 6 11.5 10.2 3.5 10.2 1 6Z" fill="none" stroke="#e0e0e0" stroke-width="1.6"/><circle cx="7.5" cy="6" r="2.2" fill="#e0e0e0"/></svg>
<svg class="a" style="left:49px;top:95px" width="8" height="10" viewBox="0 0 8 10"><path d="M1 1.5L7 5 1 8.5Z" fill="#ccc"/></svg>
<svg class="a" style="left:65px;top:92px" width="16" height="16" viewBox="0 0 16 16"><path d="M2 2.5H14L8 14.5Z" fill="none" stroke="#e8954a" stroke-width="2.4" stroke-linejoin="round"/></svg>
<div class="t" style="left:87px;top:94.5px;color:#e0e0e0">Torus.001</div>
<svg class="a" style="left:163px;top:92px" width="16" height="16" viewBox="0 0 16 16"><path d="M3 3.5H13L8 13.5Z" fill="none" stroke="#19c9a0" stroke-width="1.3"/><rect x="1.5" y="2" width="3" height="3" fill="#282828" stroke="#19c9a0" stroke-width="1.1"/><rect x="11.5" y="2" width="3" height="3" fill="#282828" stroke="#19c9a0" stroke-width="1.1"/><rect x="6.5" y="12" width="3" height="3" fill="#282828" stroke="#19c9a0" stroke-width="1.1"/></svg>
<svg class="a" style="left:320px;top:94px" width="15" height="12" viewBox="0 0 15 12"><path d="M1 6C3.5 1.8 11.5 1.8 14 6 11.5 10.2 3.5 10.2 1 6Z" fill="none" stroke="#e0e0e0" stroke-width="1.6"/><circle cx="7.5" cy="6" r="2.2" fill="#e0e0e0"/></svg>
<svg class="a" style="left:49px;top:115px" width="8" height="10" viewBox="0 0 8 10"><path d="M1 1.5L7 5 1 8.5Z" fill="#ccc"/></svg>
<svg class="a" style="left:65px;top:112px" width="16" height="16" viewBox="0 0 16 16"><path d="M2 2.5H14L8 14.5Z" fill="none" stroke="#e8954a" stroke-width="2.4" stroke-linejoin="round"/></svg>
<div class="t" style="left:87px;top:114.5px;color:#e0e0e0">Torus.002</div>
<svg class="a" style="left:163px;top:112px" width="16" height="16" viewBox="0 0 16 16"><path d="M3 3.5H13L8 13.5Z" fill="none" stroke="#19c9a0" stroke-width="1.3"/><rect x="1.5" y="2" width="3" height="3" fill="#282828" stroke="#19c9a0" stroke-width="1.1"/><rect x="11.5" y="2" width="3" height="3" fill="#282828" stroke="#19c9a0" stroke-width="1.1"/><rect x="6.5" y="12" width="3" height="3" fill="#282828" stroke="#19c9a0" stroke-width="1.1"/></svg>
<svg class="a" style="left:320px;top:114px" width="15" height="12" viewBox="0 0 15 12"><path d="M1 6C3.5 1.8 11.5 1.8 14 6 11.5 10.2 3.5 10.2 1 6Z" fill="none" stroke="#e0e0e0" stroke-width="1.6"/><circle cx="7.5" cy="6" r="2.2" fill="#e0e0e0"/></svg>
<svg class="a" style="left:49px;top:136px" width="8" height="10" viewBox="0 0 8 10"><path d="M1 1.5L7 5 1 8.5Z" fill="#ccc"/></svg>
<svg class="a" style="left:65px;top:133px" width="16" height="16" viewBox="0 0 16 16"><path d="M2 2.5H14L8 14.5Z" fill="none" stroke="#e8954a" stroke-width="2.4" stroke-linejoin="round"/></svg>
<div class="t" style="left:87px;top:135.5px;color:#e0e0e0">Torus.003</div>
<svg class="a" style="left:163px;top:133px" width="16" height="16" viewBox="0 0 16 16"><path d="M3 3.5H13L8 13.5Z" fill="none" stroke="#19c9a0" stroke-width="1.3"/><rect x="1.5" y="2" width="3" height="3" fill="#282828" stroke="#19c9a0" stroke-width="1.1"/><rect x="11.5" y="2" width="3" height="3" fill="#282828" stroke="#19c9a0" stroke-width="1.1"/><rect x="6.5" y="12" width="3" height="3" fill="#282828" stroke="#19c9a0" stroke-width="1.1"/></svg>
<svg class="a" style="left:320px;top:135px" width="15" height="12" viewBox="0 0 15 12"><path d="M1 6C3.5 1.8 11.5 1.8 14 6 11.5 10.2 3.5 10.2 1 6Z" fill="none" stroke="#e0e0e0" stroke-width="1.6"/><circle cx="7.5" cy="6" r="2.2" fill="#e0e0e0"/></svg>
<svg class="a" style="left:49px;top:157px" width="8" height="10" viewBox="0 0 8 10"><path d="M1 1.5L7 5 1 8.5Z" fill="#ccc"/></svg>
<svg class="a" style="left:65px;top:154px" width="16" height="16" viewBox="0 0 16 16"><path d="M2 2.5H14L8 14.5Z" fill="none" stroke="#e8954a" stroke-width="2.4" stroke-linejoin="round"/></svg>
<div class="t" style="left:87px;top:156.5px;color:#e0e0e0">Torus.004</div>
<svg class="a" style="left:163px;top:154px" width="16" height="16" viewBox="0 0 16 16"><path d="M3 3.5H13L8 13.5Z" fill="none" stroke="#19c9a0" stroke-width="1.3"/><rect x="1.5" y="2" width="3" height="3" fill="#282828" stroke="#19c9a0" stroke-width="1.1"/><rect x="11.5" y="2" width="3" height="3" fill="#282828" stroke="#19c9a0" stroke-width="1.1"/><rect x="6.5" y="12" width="3" height="3" fill="#282828" stroke="#19c9a0" stroke-width="1.1"/></svg>
<svg class="a" style="left:320px;top:156px" width="15" height="12" viewBox="0 0 15 12"><path d="M1 6C3.5 1.8 11.5 1.8 14 6 11.5 10.2 3.5 10.2 1 6Z" fill="none" stroke="#e0e0e0" stroke-width="1.6"/><circle cx="7.5" cy="6" r="2.2" fill="#e0e0e0"/></svg>
<svg class="a" style="left:49px;top:178px" width="8" height="10" viewBox="0 0 8 10"><path d="M1 1.5L7 5 1 8.5Z" fill="#ccc"/></svg>
<svg class="a" style="left:65px;top:175px" width="16" height="16" viewBox="0 0 16 16"><path d="M2 2.5H14L8 14.5Z" fill="none" stroke="#e8954a" stroke-width="2.4" stroke-linejoin="round"/></svg>
<div class="t" style="left:87px;top:177.5px;color:#e0e0e0">Torus.005</div>
<svg class="a" style="left:163px;top:175px" width="16" height="16" viewBox="0 0 16 16"><path d="M3 3.5H13L8 13.5Z" fill="none" stroke="#19c9a0" stroke-width="1.3"/><rect x="1.5" y="2" width="3" height="3" fill="#282828" stroke="#19c9a0" stroke-width="1.1"/><rect x="11.5" y="2" width="3" height="3" fill="#282828" stroke="#19c9a0" stroke-width="1.1"/><rect x="6.5" y="12" width="3" height="3" fill="#282828" stroke="#19c9a0" stroke-width="1.1"/></svg>
<svg class="a" style="left:320px;top:177px" width="15" height="12" viewBox="0 0 15 12"><path d="M1 6C3.5 1.8 11.5 1.8 14 6 11.5 10.2 3.5 10.2 1 6Z" fill="none" stroke="#e0e0e0" stroke-width="1.6"/><circle cx="7.5" cy="6" r="2.2" fill="#e0e0e0"/></svg>
<svg class="a" style="left:49px;top:199px" width="8" height="10" viewBox="0 0 8 10"><path d="M1 1.5L7 5 1 8.5Z" fill="#ccc"/></svg>
<svg class="a" style="left:65px;top:196px" width="16" height="16" viewBox="0 0 16 16"><path d="M2 2.5H14L8 14.5Z" fill="none" stroke="#e8954a" stroke-width="2.4" stroke-linejoin="round"/></svg>
<div class="t" style="left:87px;top:198.5px;color:#e0e0e0">Torus.006</div>
<svg class="a" style="left:163px;top:196px" width="16" height="16" viewBox="0 0 16 16"><path d="M3 3.5H13L8 13.5Z" fill="none" stroke="#19c9a0" stroke-width="1.3"/><rect x="1.5" y="2" width="3" height="3" fill="#282828" stroke="#19c9a0" stroke-width="1.1"/><rect x="11.5" y="2" width="3" height="3" fill="#282828" stroke="#19c9a0" stroke-width="1.1"/><rect x="6.5" y="12" width="3" height="3" fill="#282828" stroke="#19c9a0" stroke-width="1.1"/></svg>
<svg class="a" style="left:320px;top:198px" width="15" height="12" viewBox="0 0 15 12"><path d="M1 6C3.5 1.8 11.5 1.8 14 6 11.5 10.2 3.5 10.2 1 6Z" fill="none" stroke="#e0e0e0" stroke-width="1.6"/><circle cx="7.5" cy="6" r="2.2" fill="#e0e0e0"/></svg>
</div>
<div id="props" class="a">
<div class="a" style="left:0;top:0;width:346px;height:26px;background:#424242"></div>
<div class="btn" style="left:10px;top:3px;width:33px;height:21px;background:#2e2e2e;border-color:#383838"></div>
<svg class="a" style="left:14px;top:5px" width="28" height="18" viewBox="0 0 28 18"><rect x="1" y="2" width="12" height="5.5" rx="2.75" fill="#ddd"/><rect x="1" y="10" width="12" height="5.5" rx="2.75" fill="#ddd"/><rect x="6" y="3.2" width="5.5" height="3" rx="1" fill="#2e2e2e"/><rect x="9" y="11.2" width="2.5" height="3" rx="1" fill="#2e2e2e"/><path d="M17 8l3 3 3-3" stroke="#ccc" stroke-width="1.3" fill="none"/></svg>
<div class="a" style="left:117px;top:3px;width:113px;height:19px;background:#1d1d1d;border-radius:4px"></div>
<svg class="a" style="left:121px;top:4px" width="16" height="16" viewBox="0 0 16 16"><circle cx="9.5" cy="6.5" r="4.2" fill="none" stroke="#ddd" stroke-width="1.3"/><path d="M6.5 9.5L2 14" stroke="#ddd" stroke-width="1.4"/></svg>
<div class="a" style="left:0;top:26px;width:29px;height:660px;background:#1f1f1f"></div>
<div class="a" style="left:3px;top:36px;width:26px;height:25px;background:#282828;border-radius:5px 0 0 5px"></div>
<div class="a" style="left:3px;top:73px;width:26px;height:27px;background:#282828;border-radius:5px 0 0 5px"></div>
<div class="a" style="left:3px;top:102px;width:26px;height:26px;background:#282828;border-radius:5px 0 0 5px"></div>
<div class="a" style="left:3px;top:130px;width:26px;height:27px;background:#282828;border-radius:5px 0 0 5px"></div>
<div class="a" style="left:3px;top:160px;width:26px;height:25px;background:#282828;border-radius:5px 0 0 5px"></div>
<div class="a" style="left:3px;top:188px;width:26px;height:26px;background:#282828;border-radius:5px 0 0 5px"></div>
<div class="a" style="left:3px;top:226px;width:26px;height:29px;background:#282828;border-radius:5px 0 0 5px"></div>
<div class="a" style="left:3px;top:256px;width:26px;height:28px;background:#282828;border-radius:5px 0 0 5px"></div>
<div class="a" style="left:3px;top:285px;width:26px;height:27px;background:#282828;border-radius:5px 0 0 5px"></div>
<div class="a" style="left:3px;top:313px;width:26px;height:28px;background:#282828;border-radius:5px 0 0 5px"></div>
<div class="a" style="left:3px;top:342px;width:26px;height:27px;background:#282828;border-radius:5px 0 0 5px"></div>
<div class="a" style="left:3px;top:370px;width:26px;height:28px;background:#282828;border-radius:5px 0 0 5px"></div>
<div class="a" style="left:3px;top:400px;width:29px;height:29px;background:#424242;border-radius:5px 0 0 5px"></div>
<div class="a" style="left:3px;top:439px;width:26px;height:27px;background:#282828;border-radius:5px 0 0 5px"></div>
<svg class="a" style="left:8px;top:40.5px" width="16" height="16" viewBox="0 0 16 16"><path d="M4 3v5" stroke="#ddd" stroke-width="1.6"/><ellipse cx="4" cy="11.5" rx="2.2" ry="3" fill="#ddd"/><path d="M11 6v9" stroke="#ddd" stroke-width="2.2"/><path d="M8 2v3a3 3 0 0 0 6 0V2" stroke="#ddd" stroke-width="1.8" fill="none"/></svg>
<svg class="a" style="left:8px;top:78.5px" width="16" height="16" viewBox="0 0 16 16"><rect x="2" y="6" width="12" height="8" rx="1" fill="none" stroke="#ddd" stroke-width="1.5"/><path d="M4 6l2-3M9 6l2-3" stroke="#ddd" stroke-width="1.4"/><rect x="11" y="8" width="2" height="4" fill="#ddd"/></svg>
<svg class="a" style="left:8px;top:107.0px" width="16" height="16" viewBox="0 0 16 16"><path d="M2 6h12v5H2z" fill="#ddd"/><path d="M4 4h8V2H4z" fill="#ddd"/><rect x="4" y="9" width="8" height="6" fill="#ddd" stroke="#282828" stroke-width="1"/><path d="M6 14l2-3 2 3z" fill="#282828"/></svg>
<svg class="a" style="left:8px;top:135.5px" width="16" height="16" viewBox="0 0 16 16"><rect x="5" y="2" width="9" height="9" fill="none" stroke="#ddd" stroke-width="1.3"/><path d="M3 4v9h9M1 6v9h9" stroke="#ddd" stroke-width="1" fill="none"/><path d="M6 10l3-4 2 2 1-1 2 3z" fill="#ddd"/></svg>
<svg class="a" style="left:8px;top:164.5px" width="16" height="16" viewBox="0 0 16 16"><path d="M5 3l-3 7h6z" fill="#ddd"/><circle cx="11" cy="4" r="2" fill="#ddd"/><circle cx="10" cy="11" r="3.5" fill="none" stroke="#ddd" stroke-width="1.4"/></svg>
<svg class="a" style="left:8px;top:193.0px" width="16" height="16" viewBox="0 0 16 16"><circle cx="8" cy="8.5" r="6" fill="#e46a7a"/><path d="M4.5 5.5c1.5 0 2.5 1 2 2.5s1.5 1.5 1.5 3l-1 2.5M10 3.2c-.5 1.5.5 2.5 2 2.5l1.5.5M9.5 9.5l2 1 .5 2" stroke="#1f1f1f" stroke-width="1.3" fill="none"/><path d="M13.5 2.5l-1 1.5M2 13.5l1.5-1" stroke="#e46a7a" stroke-width="1.3"/></svg>
<svg class="a" style="left:8px;top:232.5px" width="16" height="16" viewBox="0 0 16 16"><rect x="4" y="4" width="8" height="8" fill="#e8954a"/><path d="M1.5 4.5v-3h3M11.5 1.5h3v3M14.5 11.5v3h-3M4.5 14.5h-3v-3" stroke="#e8954a" stroke-width="1.2" fill="none"/></svg>
<svg class="a" style="left:8px;top:262.0px" width="16" height="16" viewBox="0 0 16 16"><path d="M3 13l6-6" stroke="#6aa0e0" stroke-width="2.6" stroke-linecap="round"/><circle cx="11" cy="5" r="3.5" fill="#6aa0e0"/><path d="M11 5l3-3" stroke="#1f1f1f" stroke-width="2"/></svg>
<svg class="a" style="left:8px;top:290.5px" width="16" height="16" viewBox="0 0 16 16"><circle cx="3.5" cy="3.5" r="2" fill="#6aa0e0"/><circle cx="13" cy="4" r="1.6" fill="#6aa0e0"/><circle cx="4" cy="13" r="1.6" fill="#6aa0e0"/><circle cx="13" cy="13" r="1.6" fill="#6aa0e0"/><path d="M3.5 3.5L13 4M3.5 3.5L4 13M3.5 3.5L13 13" stroke="#6aa0e0" stroke-width="1.2"/></svg>
<svg class="a" style="left:8px;top:319.0px" width="16" height="16" viewBox="0 0 16 16"><circle cx="8" cy="8" r="5.5" fill="none" stroke="#6aa0e0" stroke-width="1.8" stroke-dasharray="22 8"/><circle cx="7" cy="9" r="2.5" fill="#6aa0e0"/><circle cx="12.5" cy="3.5" r="1.8" fill="#6aa0e0"/></svg>
<svg class="a" style="left:8px;top:347.5px" width="16" height="16" viewBox="0 0 16 16"><ellipse cx="8" cy="8.5" rx="6.5" ry="4.5" transform="rotate(-40 8 8)" fill="none" stroke="#6aa0e0" stroke-width="1.7"/><circle cx="6.5" cy="10" r="2" fill="#6aa0e0"/><circle cx="11" cy="5.5" r="1.5" fill="#6aa0e0"/></svg>
<svg class="a" style="left:8px;top:376.0px" width="16" height="16" viewBox="0 0 16 16"><path d="M3 3.5H13L8 13.5Z" fill="none" stroke="#19c9a0" stroke-width="1.5"/><rect x="1.5" y="2" width="3" height="3" fill="#1f1f1f" stroke="#19c9a0" stroke-width="1.1"/><rect x="11.5" y="2" width="3" height="3" fill="#1f1f1f" stroke="#19c9a0" stroke-width="1.1"/><rect x="6.5" y="12" width="3" height="3" fill="#1f1f1f" stroke="#19c9a0" stroke-width="1.1"/></svg>
<svg class="a" style="left:8px;top:406.5px" width="16" height="16" viewBox="0 0 16 16"><circle cx="8" cy="8" r="6.5" fill="#e8e8e8"/><path d="M8 1.5A6.5 6.5 0 0 0 1.5 8H8z" fill="#e8687a"/><path d="M8 8h6.5A6.5 6.5 0 0 1 8 14.5z" fill="#e8687a"/><circle cx="8" cy="8" r="6.5" fill="none" stroke="#e8687a" stroke-width="1"/></svg>
<svg class="a" style="left:8px;top:444.5px" width="16" height="16" viewBox="0 0 16 16"><rect x="2" y="2" width="12" height="12" fill="#e8687a"/><path d="M2 2h3v3H2zM8 2h3v3H8zM5 5h3v3H5zM11 5h3v3h-3zM2 8h3v3H2zM8 8h3v3H8zM5 11h3v3H5zM11 11h3v3h-3z" fill="#3a1f22"/></svg>
<svg class="a" style="left:40px;top:36px" width="16" height="16" viewBox="0 0 16 16"><rect x="4" y="4" width="8" height="8" fill="#e0e0e0"/><path d="M1.5 4.5v-3h3M11.5 1.5h3v3M14.5 11.5v3h-3M4.5 14.5h-3v-3" stroke="#e0e0e0" stroke-width="1.2" fill="none"/></svg>
<div class="t" style="left:65px;top:38px;color:#e0e0e0">Sphere</div>
<svg class="a" style="left:113px;top:40px" width="6" height="9" viewBox="0 0 6 9"><path d="M1 1l3.5 3.5L1 8" stroke="#666" stroke-width="1.1" fill="none"/></svg>
<svg class="a" style="left:132px;top:36px" width="16" height="16" viewBox="0 0 16 16"><circle cx="8" cy="8" r="6.5" fill="#e8e8e8"/><path d="M8 1.5A6.5 6.5 0 0 0 1.5 8H8z" fill="#424242"/><path d="M8 8h6.5A6.5 6.5 0 0 1 8 14.5z" fill="#424242"/><circle cx="8" cy="8" r="6.5" fill="none" stroke="#e8e8e8" stroke-width="1"/></svg>
<div class="t" style="left:157px;top:38px;color:#e0e0e0">Material.001</div>
<svg class="a" style="left:319px;top:36px" width="16" height="16" viewBox="0 0 16 16"><path d="M9 2l5 5-2 0.5-3 3 0 2.5-1 1-6-6 1-1 2.5 0 3-3z" fill="none" stroke="#aaa" stroke-width="1.1"/><path d="M5 11l-3.5 3.5" stroke="#aaa" stroke-width="1.1"/></svg>
<div class="a" style="left:39px;top:72px;width:272px;height:83px;background:#2e2e2e;border-radius:4px;border:1px solid #363636"></div>
<div class="a" style="left:44px;top:77px;width:262px;height:20px;background:#5a5e66;border-radius:3px"></div>
<div class="a" style="left:46px;top:79px;width:16px;height:16px;border-radius:8px;background:radial-gradient(circle at 35% 35%,#fff,#aaa 60%,#666)"></div>
<div class="t" style="left:70px;top:80px;color:#e6e6e6">Material.001</div>
<svg class="a" style="left:49px;top:139px" width="8" height="9" viewBox="0 0 8 9"><path d="M1 1l6 3.5L1 8Z" fill="#aaa"/></svg>
<div class="a" style="left:318px;top:73px;width:19px;height:41px;background:#545454;border-radius:4px"></div>
<div class="a" style="left:318px;top:93px;width:19px;height:1px;background:#3c3c3c"></div>
<div class="t" style="left:322px;top:73px;font-size:17px;color:#ddd;line-height:18px">+</div>
<div class="a" style="left:322px;top:103px;width:11px;height:1.5px;background:#ddd"></div>
<div class="a" style="left:318px;top:120px;width:19px;height:20px;background:#2e2e2e;border-radius:4px"></div>
<svg class="a" style="left:322px;top:127px" width="11" height="7" viewBox="0 0 11 7"><path d="M1 1l4.5 4.5L10 1" stroke="#ccc" stroke-width="1.3" fill="none"/></svg>
<div class="a" style="left:39px;top:160px;width:297px;height:20px;background:#1d1d1d;border-radius:4px"></div>
<div class="a" style="left:39px;top:160px;width:32px;height:20px;background:#2e2e2e;border-radius:4px 0 0 4px"></div>
<svg class="a" style="left:42px;top:162px" width="28" height="16" viewBox="0 0 28 16"><circle cx="8" cy="8" r="6.5" fill="#e8e8e8"/><path d="M8 1.5A6.5 6.5 0 0 0 1.5 8H8z" fill="#2e2e2e"/><path d="M8 8h6.5A6.5 6.5 0 0 1 8 14.5z" fill="#2e2e2e"/><path d="M17 6l3 3 3-3" stroke="#ccc" stroke-width="1.3" fill="none"/></svg>
<div class="t" style="left:78px;top:163px;color:#e0e0e0">Materia</div>
<div class="a" style="left:316px;top:160px;width:20px;height:20px;background:#2e2e2e;border-radius:0 4px 4px 0"></div><svg class="a" style="left:313px;top:161px" width="24" height="18" viewBox="0 0 24 18"><path d="M3 15l4-9" stroke="#ddd" stroke-width="1.3"/><rect x="6" y="2" width="4" height="4" fill="none" stroke="#ddd" stroke-width="1.2"/><path d="M14 8l3 3 3-3" stroke="#ccc" stroke-width="1.3" fill="none"/></svg>
<div class="a" style="left:29px;top:188px;width:317px;height:50px;background:#3d3d3d"></div>
<svg class="a" style="left:38px;top:198px" width="8" height="9" viewBox="0 0 8 9"><path d="M1 1l6 3.5L1 8Z" fill="#aaa"/></svg>
<div class="t" style="left:52px;top:195px;color:#e0e0e0">Preview</div>
<svg class="a" style="left:37px;top:223px" width="9" height="8" viewBox="0 0 9 8"><path d="M1 1h7L4.5 7Z" fill="#aaa"/></svg>
<div class="t" style="left:52px;top:220px;color:#e0e0e0">Surface</div>
<div class="a" style="left:29px;top:238px;width:317px;height:450px;background:#383838"></div>
<svg class="a" style="left:326px;top:199px" width="13" height="6" viewBox="0 0 13 6"><path d="M1 1.5h11M1 4.5h11" stroke="#5a5a5a" stroke-width="1" stroke-dasharray="1.5 1.2"/></svg>
<svg class="a" style="left:326px;top:224px" width="13" height="6" viewBox="0 0 13 6"><path d="M1 1.5h11M1 4.5h11" stroke="#5a5a5a" stroke-width="1" stroke-dasharray="1.5 1.2"/></svg>
<div class="a" style="left:39px;top:249px;width:297px;height:19px;background:#4772b3;border-radius:4px"></div>
<svg class="a" style="left:43px;top:250px" width="16" height="16" viewBox="0 0 16 16"><rect x="1.5" y="2" width="8" height="5" rx="1.5" fill="#eee"/><rect x="1.5" y="9" width="8" height="5" rx="1.5" fill="#eee"/><path d="M11 4c3 0 3 8 0 8" stroke="#eee" stroke-width="1.2" fill="none"/></svg>
<div class="t" style="left:101px;top:289px;color:#e0e0e0">Sur</div>
<div class="a" style="left:325px;top:331px;width:5px;height:5px;border-radius:3px;background:#e0e0e0"></div>
<div class="a" style="left:325px;top:357px;width:5px;height:5px;border-radius:3px;background:#e0e0e0"></div>
<div class="t" style="right:204px;top:378px;color:#e0e0e0;text-align:right">Base Color</div>
<div class="a" style="left:150px;top:375px;width:20px;height:20px;background:#2b2b2b;border-radius:4px 0 0 4px"></div><div class="a" style="left:156px;top:381px;width:7px;height:7px;border-radius:4px;background:#c7c729"></div>
<div class="a" style="left:169px;top:375px;width:146px;height:20px;background:#e6e6e6;border-radius:0 4px 4px 0"></div>
<div class="a" style="left:325px;top:383px;width:5px;height:5px;border-radius:3px;background:#e0e0e0"></div>
<div class="t" style="right:204px;top:404px;color:#e0e0e0;text-align:right">Subsurface</div>
<div class="a" style="left:150px;top:401px;width:20px;height:20px;background:#2b2b2b;border-radius:4px 0 0 4px"></div><div class="a" style="left:156px;top:407px;width:7px;height:7px;border-radius:4px;background:#a1a1a1"></div>
<div class="a" style="left:169px;top:401px;width:146px;height:20px;background:#545454;border-radius:0 4px 4px 0;overflow:hidden"><div class="t" style="left:0;width:146px;top:3px;text-align:center;color:#e6e6e6">0.000</div></div>
<div class="a" style="left:325px;top:409px;width:5px;height:5px;border-radius:3px;background:#e0e0e0"></div>
<div class="t" style="right:204px;top:430px;color:#e0e0e0;text-align:right">Subsurface Radius</div>
<div class="a" style="left:150px;top:427px;width:20px;height:20px;background:#2b2b2b;border-radius:4px 0 0 4px"></div><div class="a" style="left:156px;top:433px;width:7px;height:7px;border-radius:4px;background:#6363c7"></div>
<div class="a" style="left:177px;top:427px;width:138px;height:61px;background:#545454;border-radius:4px"></div>
<div class="t" style="left:177px;width:138px;top:430px;text-align:center;color:#e6e6e6">1.000</div>
<div class="a" style="left:325px;top:435px;width:5px;height:5px;border-radius:3px;background:#e0e0e0"></div>
<div class="t" style="left:177px;width:138px;top:450px;text-align:center;color:#e6e6e6">0.200</div>
<div class="a" style="left:325px;top:455px;width:5px;height:5px;border-radius:3px;background:#e0e0e0"></div>
<div class="t" style="left:177px;width:138px;top:471px;text-align:center;color:#e6e6e6">0.100</div>
<div class="a" style="left:325px;top:476px;width:5px;height:5px;border-radius:3px;background:#e0e0e0"></div>
<div class="a" style="left:177px;top:447px;width:138px;height:1px;background:#484848"></div>
<div class="a" style="left:177px;top:468px;width:138px;height:1px;background:#484848"></div>
<div class="t" style="right:204px;top:498px;color:#e0e0e0;text-align:right">Subsurface Color</div>
<div class="a" style="left:150px;top:495px;width:20px;height:20px;background:#2b2b2b;border-radius:4px 0 0 4px"></div><div class="a" style="left:156px;top:501px;width:7px;height:7px;border-radius:4px;background:#c7c729"></div>
<div class="a" style="left:169px;top:495px;width:146px;height:20px;background:#e6e6e6;border-radius:0 4px 4px 0"></div>
<div class="a" style="left:325px;top:503px;width:5px;height:5px;border-radius:3px;background:#e0e0e0"></div>
<div class="t" style="right:204px;top:524px;color:#e0e0e0;text-align:right">Metallic</div>
<div class="a" style="left:150px;top:521px;width:20px;height:20px;background:#2b2b2b;border-radius:4px 0 0 4px"></div><div class="a" style="left:156px;top:527px;width:7px;height:7px;border-radius:4px;background:#a1a1a1"></div>
<div class="a" style="left:169px;top:521px;width:146px;height:20px;background:#545454;border-radius:0 4px 4px 0;overflow:hidden"><div class="t" style="left:0;width:146px;top:3px;text-align:center;color:#e6e6e6">0.000</div></div>
<div class="a" style="left:325px;top:529px;width:5px;height:5px;border-radius:3px;background:#e0e0e0"></div>
<div class="t" style="right:204px;top:550px;color:#e0e0e0;text-align:right">Specular</div>
<div class="a" style="left:150px;top:547px;width:20px;height:20px;background:#2b2b2b;border-radius:4px 0 0 4px"></div><div class="a" style="left:156px;top:553px;width:7px;height:7px;border-radius:4px;background:#a1a1a1"></div>
<div class="a" style="left:169px;top:547px;width:146px;height:20px;background:#545454;border-radius:0 4px 4px 0;overflow:hidden"><div class="a" style="left:0;top:0;width:73px;height:20px;background:#4772b3"></div><div class="t" style="left:0;width:146px;top:3px;text-align:center;color:#e6e6e6">0.500</div></div>
<div class="a" style="left:325px;top:555px;width:5px;height:5px;border-radius:3px;background:#e0e0e0"></div>
<div class="t" style="right:204px;top:576px;color:#e0e0e0;text-align:right">Specular Tint</div>
<div class="a" style="left:150px;top:573px;width:20px;height:20px;background:#2b2b2b;border-radius:4px 0 0 4px"></div><div class="a" style="left:156px;top:579px;width:7px;height:7px;border-radius:4px;background:#a1a1a1"></div>
<div class="a" style="left:169px;top:573px;width:146px;height:20px;background:#545454;border-radius:0 4px 4px 0;overflow:hidden"><div class="t" style="left:0;width:146px;top:3px;text-align:center;color:#e6e6e6">0.000</div></div>
<div class="a" style="left:325px;top:581px;width:5px;height:5px;border-radius:3px;background:#e0e0e0"></div>
<div class="t" style="right:204px;top:602px;color:#e0e0e0;text-align:right">Roughness</div>
<div class="a" style="left:150px;top:599px;width:20px;height:20px;background:#2b2b2b;border-radius:4px 0 0 4px"></div><div class="a" style="left:156px;top:605px;width:7px;height:7px;border-radius:4px;background:#a1a1a1"></div>
<div class="a" style="left:169px;top:599px;width:146px;height:20px;background:#545454;border-radius:0 4px 4px 0;overflow:hidden"><div class="a" style="left:0;top:0;width:73px;height:20px;background:#4772b3"></div><div class="t" style="left:0;width:146px;top:3px;text-align:center;color:#e6e6e6">0.500</div></div>
<div class="a" style="left:325px;top:607px;width:5px;height:5px;border-radius:3px;background:#e0e0e0"></div>
<div class="t" style="right:204px;top:628px;color:#e0e0e0;text-align:right">Anisotropic</div>
<div class="a" style="left:150px;top:625px;width:20px;height:20px;background:#2b2b2b;border-radius:4px 0 0 4px"></div><div class="a" style="left:156px;top:631px;width:7px;height:7px;border-radius:4px;background:#a1a1a1"></div>
<div class="a" style="left:169px;top:625px;width:146px;height:20px;background:#545454;border-radius:0 4px 4px 0;overflow:hidden"><div class="t" style="left:0;width:146px;top:3px;text-align:center;color:#e6e6e6">0.000</div></div>
<div class="a" style="left:325px;top:633px;width:5px;height:5px;border-radius:3px;background:#e0e0e0"></div>
<div class="t" style="right:204px;top:654px;color:#e0e0e0;text-align:right">Anisotropic Rotati...</div>
<div class="a" style="left:150px;top:651px;width:20px;height:20px;background:#2b2b2b;border-radius:4px 0 0 4px"></div><div class="a" style="left:156px;top:657px;width:7px;height:7px;border-radius:4px;background:#a1a1a1"></div>
<div class="a" style="left:169px;top:651px;width:146px;height:20px;background:#545454;border-radius:0 4px 4px 0;overflow:hidden"><div class="t" style="left:0;width:146px;top:3px;text-align:center;color:#e6e6e6">0.000</div></div>
<div class="a" style="left:325px;top:659px;width:5px;height:5px;border-radius:3px;background:#e0e0e0"></div>
<div class="a" style="left:150px;top:677px;width:20px;height:20px;background:#2b2b2b;border-radius:4px 0 0 4px"></div><div class="a" style="left:156px;top:683px;width:7px;height:7px;border-radius:4px;background:#a1a1a1"></div>
<div class="a" style="left:169px;top:677px;width:146px;height:20px;background:#545454;border-radius:0 4px 4px 0;overflow:hidden"><div class="t" style="left:0;width:146px;top:3px;text-align:center;color:#e6e6e6">0.000</div></div>
<div class="a" style="left:119px;top:72px;width:198px;height:304px;background:#232323;border-radius:5px;box-shadow:0 2px 6px rgba(0,0,0,0.5)"></div>
<div class="a" style="left:129px;top:84px;width:156px;height:156px;border-radius:78px;background:conic-gradient(from 0deg,#00e7e7,#0073e7,#0000e7,#7300e7,#e700e7,#e70073,#e70000,#e77300,#e7e700,#73e700,#00e700,#00e773,#00e7e7)"></div>
<div class="a" style="left:129px;top:84px;width:156px;height:156px;border-radius:78px;background:radial-gradient(circle closest-side,rgba(231,231,231,1) 0%,rgba(231,231,231,0.55) 40%,rgba(231,231,231,0) 100%)"></div>
<div class="a" style="left:129px;top:84px;width:156px;height:156px;border-radius:78px;background:rgba(231,231,231,0.0);box-shadow:inset 0 0 1px 1px rgba(0,0,0,0.35)"></div>
<div class="a" style="left:203.5px;top:158.5px;width:7px;height:7px;border-radius:4px;border:1.5px solid #222;background:transparent;box-shadow:0 0 0 1px #fff inset"></div>
<div class="a" style="left:292.5px;top:85px;width:13px;height:156px;border-radius:4px;background:linear-gradient(#fafafa,#000)"></div>
<div class="a" style="left:294.5px;top:95px;width:9px;height:9px;border-radius:5px;border:2px solid #1a1a1a;background:#f4f4f4"></div>
<div class="a" style="left:130px;top:252px;width:175px;height:19px;background:#545454;border-radius:4px;overflow:hidden"><div class="a" style="left:57px;top:0;width:59px;height:19px;background:#4772b3"></div><div class="a" style="left:116px;top:0;width:1px;height:19px;background:#464646"></div></div>
<div class="t" style="left:139px;top:255px;color:#e6e6e6">RGB</div>
<div class="t" style="left:196px;top:255px;color:#fff">HSV</div>
<div class="t" style="left:255px;top:255px;color:#e6e6e6">Hex</div>
<div class="a" style="left:130px;top:283px;width:145px;height:61px;background:#545454;border-radius:4px;overflow:hidden"><div class="a" style="left:0;top:41px;width:130px;height:20px;background:#4772b3"></div><div class="a" style="left:0;top:20px;width:145px;height:1px;background:#464646"></div><div class="a" style="left:0;top:40px;width:145px;height:1px;background:#464646"></div></div>
<div class="a" style="left:130px;top:346px;width:145px;height:20px;background:#4772b3;border-radius:4px"></div>
<div class="t" style="left:140px;top:286px;color:#e6e6e6">H</div>
<div class="t" style="right:77px;top:286px;color:#e6e6e6;text-align:right">0.000</div>
<div class="t" style="left:140px;top:306px;color:#e6e6e6">S</div>
<div class="t" style="right:77px;top:306px;color:#e6e6e6;text-align:right">0.000</div>
<div class="t" style="left:140px;top:327px;color:#e6e6e6">V</div>
<div class="t" style="right:77px;top:327px;color:#e6e6e6;text-align:right">0.906</div>
<div class="t" style="left:140px;top:349px;color:#e6e6e6">A</div>
<div class="t" style="right:77px;top:349px;color:#e6e6e6;text-align:right">1.000</div>
<div class="a" style="left:286px;top:284px;width:20px;height:20px;background:#545454;border-radius:4px"></div>
<svg class="a" style="left:288px;top:286px" width="16" height="16" viewBox="0 0 16 16"><path d="M2.5 13.5l1-2.5 6-6 1.5 1.5-6 6z" fill="none" stroke="#eee" stroke-width="1.2"/><path d="M8 4.5l3.5 3.5M9.5 6.5l2.8-2.8a1.6 1.6 0 0 0-2.2-2.2L7.3 4.3z" fill="#eee" stroke="#eee" stroke-width="1.2"/></svg>
<div class="a" style="left:74px;top:362px;width:246px;height:46px;border:6.2px solid #ffff00"></div>
</div>
<div id="tl" class="a">
<div class="a" style="left:0;top:0;width:1651px;height:25px;background:#3a3a3a"></div>
<div class="btn" style="left:8px;top:3px;width:32px;height:20px;background:#282828"></div>
<svg class="a" style="left:11px;top:5px" width="28" height="16" viewBox="0 0 28 16"><circle cx="8" cy="8" r="6.5" fill="#e6e6e6"/><path d="M9.5 4L6 8l3.5 4" stroke="#282828" stroke-width="2" fill="none"/><path d="M17 7l3 3 3-3" stroke="#ccc" stroke-width="1.3" fill="none"/></svg>
<div class="btn" style="left:47px;top:3px;width:133px;height:20px;background:#282828"></div>
<div class="a" style="left:119px;top:4px;width:1px;height:18px;background:#3a3a3a"></div>
<div class="t" style="left:55px;top:6px;color:#dcdcdc">Playback</div>
<svg class="a" style="left:108px;top:10px" width="9" height="6" viewBox="0 0 9 6"><path d="M1 1l3.5 3.5L8 1" stroke="#ccc" stroke-width="1.3" fill="none"/></svg>
<div class="t" style="left:127px;top:6px;color:#dcdcdc">Keying</div>
<svg class="a" style="left:169px;top:10px" width="9" height="6" viewBox="0 0 9 6"><path d="M1 1l3.5 3.5L8 1" stroke="#ccc" stroke-width="1.3" fill="none"/></svg>
<div class="t" style="left:188px;top:6px;color:#dcdcdc">View</div>
<div class="t" style="left:230px;top:6px;color:#dcdcdc">Marker</div>
<div class="btn" style="left:730px;top:3px;width:40px;height:20px;background:#2c2c2c"></div>
<div class="a" style="left:731px;top:4px;width:20px;height:18px;background:#545454;border-radius:3px 0 0 3px"></div>
<div class="a" style="left:736px;top:8px;width:10px;height:10px;border-radius:5px;background:#e6e6e6"></div>
<svg class="a" style="left:755px;top:11px" width="9" height="6" viewBox="0 0 9 6"><path d="M1 1l3.5 3.5L8 1" stroke="#777" stroke-width="1.1" fill="none"/></svg>
<div class="a" style="left:777px;top:3px;width:123px;height:20px;background:#545454;border-radius:4px;border:1px solid #2a2a2a"></div>
<div class="a" style="left:797.5px;top:4px;width:1px;height:18px;background:#444"></div>
<div class="a" style="left:818.0px;top:4px;width:1px;height:18px;background:#444"></div>
<div class="a" style="left:838.5px;top:4px;width:1px;height:18px;background:#444"></div>
<div class="a" style="left:859.0px;top:4px;width:1px;height:18px;background:#444"></div>
<div class="a" style="left:879.5px;top:4px;width:1px;height:18px;background:#444"></div>
<svg class="a" style="left:777px;top:3px" width="123" height="20" viewBox="0 0 123 20">
<path d="M6 5v10M16 5l-8 5 8 5z" fill="#e6e6e6" stroke="#e6e6e6" stroke-width="1.4"/>
<path d="M25 10l4-4 4 4-4 4zM38 5l-6 5 6 5z" fill="#e6e6e6"/>
<path d="M56 5l-8 5 8 5z" fill="#e6e6e6"/>
<path d="M67 5l8 5-8 5z" fill="#e6e6e6"/>
<path d="M84 5l6 5-6 5zM90 10l4-4 4 4-4 4z" fill="#e6e6e6"/>
<path d="M107 5l8 5-8 5zM116 5v10" fill="#e6e6e6" stroke="#e6e6e6" stroke-width="1.4"/>
</svg>
<div class="a" style="left:1362px;top:3px;width:77px;height:20px;background:#545454;border-radius:4px"></div>
<div class="t" style="left:1362px;width:77px;top:6px;text-align:center;color:#e6e6e6">1</div>
<div class="a" style="left:1446px;top:3px;width:199px;height:20px;background:#545454;border-radius:4px;overflow:hidden"><div class="a" style="left:0;top:0;width:20px;height:20px;background:#4a4a4a"></div><div class="a" style="left:111px;top:0;width:1px;height:20px;background:#444"></div></div>
<svg class="a" style="left:1448px;top:5px" width="16" height="16" viewBox="0 0 16 16"><circle cx="8" cy="9" r="5.5" fill="none" stroke="#ddd" stroke-width="1.3"/><path d="M8 9V6M6 2h4M8 2v1.5M12.5 4l1-1" stroke="#ddd" stroke-width="1.3"/></svg>
<div class="t" style="left:1481px;top:6px;color:#e6e6e6">Start</div>
<div class="t" style="left:1534px;top:6px;color:#e6e6e6">1</div>
<div class="t" style="left:1572px;top:6px;color:#e6e6e6">End</div>
<div class="t" style="left:1605px;top:6px;color:#e6e6e6">250</div>
<div class="a" style="left:0;top:25px;width:1651px;height:24px;background:#2a2a2a"></div>
<div class="a" style="left:0;top:49px;width:1651px;height:25px;background:#2c2c2c"></div>
<div class="a" style="left:54.4px;top:49px;width:1px;height:25px;background:#3a3a3a"></div>
<div class="a" style="left:85.0px;top:49px;width:1px;height:25px;background:#303030"></div>
<div class="a" style="left:115.7px;top:49px;width:1px;height:25px;background:#3a3a3a"></div>
<div class="a" style="left:146.4px;top:49px;width:1px;height:25px;background:#303030"></div>
<div class="a" style="left:177.1px;top:49px;width:1px;height:25px;background:#3a3a3a"></div>
<div class="a" style="left:207.7px;top:49px;width:1px;height:25px;background:#303030"></div>
<div class="a" style="left:238.4px;top:49px;width:1px;height:25px;background:#3a3a3a"></div>
<div class="a" style="left:269.1px;top:49px;width:1px;height:25px;background:#303030"></div>
<div class="a" style="left:299.8px;top:49px;width:1px;height:25px;background:#3a3a3a"></div>
<div class="a" style="left:330.4px;top:49px;width:1px;height:25px;background:#303030"></div>
<div class="a" style="left:361.1px;top:49px;width:1px;height:25px;background:#3a3a3a"></div>
<div class="a" style="left:391.8px;top:49px;width:1px;height:25px;background:#303030"></div>
<div class="a" style="left:422.5px;top:49px;width:1px;height:25px;background:#3a3a3a"></div>
<div class="a" style="left:453.1px;top:49px;width:1px;height:25px;background:#303030"></div>
<div class="a" style="left:483.8px;top:49px;width:1px;height:25px;background:#3a3a3a"></div>
<div class="a" style="left:514.5px;top:49px;width:1px;height:25px;background:#303030"></div>
<div class="a" style="left:545.2px;top:49px;width:1px;height:25px;background:#3a3a3a"></div>
<div class="a" style="left:575.8px;top:49px;width:1px;height:25px;background:#303030"></div>
<div class="a" style="left:606.5px;top:49px;width:1px;height:25px;background:#3a3a3a"></div>
<div class="a" style="left:637.2px;top:49px;width:1px;height:25px;background:#303030"></div>
<div class="a" style="left:667.9px;top:49px;width:1px;height:25px;background:#3a3a3a"></div>
<div class="a" style="left:698.5px;top:49px;width:1px;height:25px;background:#303030"></div>
<div class="a" style="left:729.2px;top:49px;width:1px;height:25px;background:#3a3a3a"></div>
<div class="a" style="left:759.9px;top:49px;width:1px;height:25px;background:#303030"></div>
<div class="a" style="left:790.6px;top:49px;width:1px;height:25px;background:#3a3a3a"></div>
<div class="a" style="left:821.2px;top:49px;width:1px;height:25px;background:#303030"></div>
<div class="a" style="left:851.9px;top:49px;width:1px;height:25px;background:#3a3a3a"></div>
<div class="a" style="left:882.6px;top:49px;width:1px;height:25px;background:#303030"></div>
<div class="a" style="left:913.3px;top:49px;width:1px;height:25px;background:#3a3a3a"></div>
<div class="a" style="left:943.9px;top:49px;width:1px;height:25px;background:#303030"></div>
<div class="a" style="left:974.6px;top:49px;width:1px;height:25px;background:#3a3a3a"></div>
<div class="a" style="left:1005.3px;top:49px;width:1px;height:25px;background:#303030"></div>
<div class="a" style="left:1036.0px;top:49px;width:1px;height:25px;background:#3a3a3a"></div>
<div class="a" style="left:1066.6px;top:49px;width:1px;height:25px;background:#303030"></div>
<div class="a" style="left:1097.3px;top:49px;width:1px;height:25px;background:#3a3a3a"></div>
<div class="a" style="left:1128.0px;top:49px;width:1px;height:25px;background:#303030"></div>
<div class="a" style="left:1158.7px;top:49px;width:1px;height:25px;background:#3a3a3a"></div>
<div class="a" style="left:1189.3px;top:49px;width:1px;height:25px;background:#303030"></div>
<div class="a" style="left:1220.0px;top:49px;width:1px;height:25px;background:#3a3a3a"></div>
<div class="a" style="left:1250.7px;top:49px;width:1px;height:25px;background:#303030"></div>
<div class="a" style="left:1281.4px;top:49px;width:1px;height:25px;background:#3a3a3a"></div>
<div class="a" style="left:1312.0px;top:49px;width:1px;height:25px;background:#303030"></div>
<div class="a" style="left:1342.7px;top:49px;width:1px;height:25px;background:#3a3a3a"></div>
<div class="a" style="left:1373.4px;top:49px;width:1px;height:25px;background:#303030"></div>
<div class="a" style="left:1404.1px;top:49px;width:1px;height:25px;background:#3a3a3a"></div>
<div class="a" style="left:1434.7px;top:49px;width:1px;height:25px;background:#303030"></div>
<div class="a" style="left:1465.4px;top:49px;width:1px;height:25px;background:#3a3a3a"></div>
<div class="a" style="left:1496.1px;top:49px;width:1px;height:25px;background:#303030"></div>
<div class="a" style="left:1526.8px;top:49px;width:1px;height:25px;background:#3a3a3a"></div>
<div class="a" style="left:1557.4px;top:49px;width:1px;height:25px;background:#303030"></div>
<div class="a" style="left:1588.1px;top:49px;width:1px;height:25px;background:#3a3a3a"></div>
<div class="a" style="left:1618.8px;top:49px;width:1px;height:25px;background:#303030"></div>
<div class="a" style="left:0;top:49px;width:1651px;height:13px;background:rgba(58,58,58,0.75)"></div>
<div class="t" style="left:95.7px;width:40px;top:31px;text-align:center;color:#c8c8c8">10</div>
<div class="t" style="left:157.1px;width:40px;top:31px;text-align:center;color:#c8c8c8">20</div>
<div class="t" style="left:218.4px;width:40px;top:31px;text-align:center;color:#c8c8c8">30</div>
<div class="t" style="left:279.8px;width:40px;top:31px;text-align:center;color:#c8c8c8">40</div>
<div class="t" style="left:341.1px;width:40px;top:31px;text-align:center;color:#c8c8c8">50</div>
<div class="t" style="left:402.5px;width:40px;top:31px;text-align:center;color:#c8c8c8">60</div>
<div class="t" style="left:463.8px;width:40px;top:31px;text-align:center;color:#c8c8c8">70</div>
<div class="t" style="left:525.2px;width:40px;top:31px;text-align:center;color:#c8c8c8">80</div>
<div class="t" style="left:586.5px;width:40px;top:31px;text-align:center;color:#c8c8c8">90</div>
<div class="t" style="left:647.9px;width:40px;top:31px;text-align:center;color:#c8c8c8">100</div>
<div class="t" style="left:709.2px;width:40px;top:31px;text-align:center;color:#c8c8c8">110</div>
<div class="t" style="left:770.6px;width:40px;top:31px;text-align:center;color:#c8c8c8">120</div>
<div class="t" style="left:831.9px;width:40px;top:31px;text-align:center;color:#c8c8c8">130</div>
<div class="t" style="left:893.3px;width:40px;top:31px;text-align:center;color:#c8c8c8">140</div>
<div class="t" style="left:954.6px;width:40px;top:31px;text-align:center;color:#c8c8c8">150</div>
<div class="t" style="left:1016.0px;width:40px;top:31px;text-align:center;color:#c8c8c8">160</div>
<div class="t" style="left:1077.3px;width:40px;top:31px;text-align:center;color:#c8c8c8">170</div>
<div class="t" style="left:1138.7px;width:40px;top:31px;text-align:center;color:#c8c8c8">180</div>
<div class="t" style="left:1200.0px;width:40px;top:31px;text-align:center;color:#c8c8c8">190</div>
<div class="t" style="left:1261.4px;width:40px;top:31px;text-align:center;color:#c8c8c8">200</div>
<div class="t" style="left:1322.7px;width:40px;top:31px;text-align:center;color:#c8c8c8">210</div>
<div class="t" style="left:1384.1px;width:40px;top:31px;text-align:center;color:#c8c8c8">220</div>
<div class="t" style="left:1445.4px;width:40px;top:31px;text-align:center;color:#c8c8c8">230</div>
<div class="t" style="left:1506.8px;width:40px;top:31px;text-align:center;color:#c8c8c8">240</div>
<div class="t" style="left:1568.1px;width:40px;top:31px;text-align:center;color:#c8c8c8">250</div>
<div class="a" style="left:9px;top:63px;width:1634px;height:9px;background:#666666;border-radius:5px"></div>
<div class="a" style="left:11px;top:63.5px;width:6px;height:6px;background:#444;border-radius:3px"></div>
<div class="a" style="left:1634px;top:63.5px;width:6px;height:6px;background:#444;border-radius:3px"></div>
<div class="a" style="left:60px;top:45px;width:2px;height:18px;background:#4772b3"></div><div class="a" style="left:60px;top:71px;width:2px;height:3px;background:#4772b3"></div>
<div class="a" style="left:48px;top:29px;width:25px;height:17px;background:#4772b3;border-radius:4px"></div>
<div class="t" style="left:48px;width:25px;top:31px;text-align:center;color:#fff">1</div>
<svg class="a" style="left:1px;top:44px" width="8" height="12" viewBox="0 0 8 12"><path d="M2 2l4 4-4 4" stroke="#888" stroke-width="1.1" fill="none"/></svg>
<svg class="a" style="left:1643px;top:42px" width="8" height="12" viewBox="0 0 8 12"><path d="M6 2L2 6l4 4" stroke="#888" stroke-width="1.1" fill="none"/></svg>
</div>
<div id="status" class="a">
<svg class="a" style="left:12px;top:3px" width="12" height="16" viewBox="0 0 12 16"><rect x="1" y="1" width="10" height="14" rx="4" fill="none" stroke="#bbb" stroke-width="1.1"/><path d="M1 6h10M6 1v5" stroke="#bbb" stroke-width="1"/><path d="M5.5 1.5H4.5A3.5 3.5 0 0 0 1.5 5V5.5H5.5Z" fill="#bbb"/></svg>
<svg class="a" style="left:258px;top:3px" width="12" height="16" viewBox="0 0 12 16"><rect x="1" y="1" width="10" height="14" rx="4" fill="none" stroke="#bbb" stroke-width="1.1"/><path d="M1 6h10M6 1v5" stroke="#bbb" stroke-width="1"/><rect x="4.5" y="2" width="3" height="4" fill="#bbb"/></svg>
<div class="t" style="left:281px;top:4px;color:#bdbdbd">Pan View</div>
<svg class="a" style="left:503px;top:3px" width="12" height="16" viewBox="0 0 12 16"><rect x="1" y="1" width="10" height="14" rx="4" fill="none" stroke="#bbb" stroke-width="1.1"/><path d="M1 6h10M6 1v5" stroke="#bbb" stroke-width="1"/><path d="M6.5 1.5H7.5A3.5 3.5 0 0 1 10.5 5V5.5H6.5Z" fill="#bbb"/></svg>
<div class="t" style="left:527px;top:4px;color:#bdbdbd">Context Menu</div>
<div class="t" style="left:1950px;top:4px;color:#aaaaaa">2.91.0</div>
</div>
<div id="taskbar" class="a">
<svg class="a" style="left:15px;top:12px" width="20" height="19" viewBox="0 0 20 19"><path d="M0 2.8L8 1.7V9H0zM9 1.5L19.5 0V9H9zM0 10h8v7.3L0 16.2zM9 10h10.5v9L9 17.5z" fill="#000"/></svg>
<div class="a" style="left:51px;top:1px;width:356px;height:41px;background:#fff"></div>
<svg class="a" style="left:61px;top:11px" width="22" height="22" viewBox="0 0 22 22"><circle cx="13.5" cy="8.5" r="6" fill="none" stroke="#111" stroke-width="1.6"/><path d="M9.2 12.8L2 20" stroke="#111" stroke-width="1.8"/></svg>
<div class="t" style="left:92px;top:12px;font-size:15.6px;line-height:18px;color:#333;letter-spacing:0">검색하려면 여기에 입력하십시오.</div>
<div class="a" style="left:424px;top:12px;width:18px;height:18px;border-radius:9px;border:2.3px solid #111"></div>
<svg class="a" style="left:474px;top:12px" width="20" height="18" viewBox="0 0 20 18"><rect x="4.5" y="4.5" width="11" height="9" fill="none" stroke="#111" stroke-width="1.6"/><path d="M1 1v16M19 1v16M4 1.5h12M4 16.5h12" stroke="#111" stroke-width="1.4"/></svg>
<svg class="a" style="left:523px;top:8px" width="26" height="26" viewBox="0 0 26 26"><rect x="2" y="5" width="22" height="16" rx="1" fill="#3a8fd8"/><rect x="4" y="7" width="18" height="12" fill="#bfe0f8"/><circle cx="9.5" cy="12" r="3.5" fill="#2a7fc8"/><path d="M9.5 12V8.5A3.5 3.5 0 0 1 13 12Z" fill="#f4c542"/><path d="M15 9h5M15 12h5M15 15h5" stroke="#2a7fc8" stroke-width="1.4"/></svg>
<svg class="a" style="left:574px;top:8px" width="26" height="26" viewBox="0 0 26 26"><path d="M2 6h8l2 2h12v14H2z" fill="#f4c542"/><path d="M2 10h22v12H2z" fill="#ffd65c"/><rect x="8" y="14" width="10" height="5" fill="#1e7fd8"/><rect x="11" y="18" width="4" height="4" fill="#1e7fd8"/></svg>
<svg class="a" style="left:625px;top:8px" width="26" height="26" viewBox="0 0 26 26"><path d="M4 8l14-5 5 15-14 5z" fill="#a8d8e8" stroke="#6aa8c0" stroke-width="0.8"/><path d="M6 9l12-4" stroke="#5aa" stroke-width="1"/><path d="M4 8l2 14 3 1z" fill="#8ac"/></svg>
<svg class="a" style="left:676px;top:8px" width="26" height="26" viewBox="0 0 26 26"><rect x="9" y="3" width="15" height="20" fill="#fff" stroke="#2b579a" stroke-width="1"/><path d="M12 8h9M12 11h9M12 14h9M12 17h9" stroke="#2b579a" stroke-width="1.2"/><path d="M1 5l12-2v20L1 21z" fill="#2b579a"/><path d="M3 9l1.6 7 1.6-5 1.6 5L9.4 9" stroke="#fff" stroke-width="1.3" fill="none"/></svg>
<svg class="a" style="left:727px;top:8px" width="26" height="26" viewBox="0 0 26 26"><circle cx="15" cy="13" r="9" fill="#f0f0f0" stroke="#d24726" stroke-width="1.2"/><path d="M15 6v7h7" fill="none" stroke="#d24726" stroke-width="1.5"/><path d="M1 5l12-2v20L1 21z" fill="#d24726"/><path d="M4.5 17V9h3a2.2 2.2 0 0 1 0 4.5h-3" stroke="#fff" stroke-width="1.5" fill="none"/></svg>
<svg class="a" style="left:778px;top:8px" width="26" height="26" viewBox="0 0 26 26"><ellipse cx="13" cy="10" rx="11" ry="6" fill="#fbe9ea" stroke="#e0464e" stroke-width="2"/><path d="M10 8l4 8M16 8l-4 8" stroke="#4a8ad8" stroke-width="1.4"/><circle cx="10" cy="20" r="2.5" fill="none" stroke="#4a8ad8" stroke-width="1.4"/><circle cx="16" cy="20" r="2.5" fill="none" stroke="#4a8ad8" stroke-width="1.4"/></svg>
<svg class="a" style="left:830px;top:8px" width="26" height="26" viewBox="0 0 26 26"><rect x="1" y="1" width="24" height="24" fill="#fae100"/><ellipse cx="13" cy="12" rx="9.5" ry="7.5" fill="#3c1e1e"/><path d="M8 18l-2 4 5-3z" fill="#3c1e1e"/><text x="13" y="14.5" font-size="6" font-family="Liberation Sans" font-weight="bold" fill="#fae100" text-anchor="middle">TALK</text></svg>
<svg class="a" style="left:881px;top:8px" width="26" height="26" viewBox="0 0 26 26"><path d="M3 15c0-7 6-11 12-10 5 1 6 5 3 7-2 1-1 4 1 5-2 4-8 6-12 4-3-1-4-3-4-6z" fill="#e8eef4" stroke="#8aa" stroke-width="1"/><circle cx="8" cy="12" r="1.8" fill="#e33"/><circle cx="11" cy="8.5" r="1.8" fill="#3a3"/><circle cx="15" cy="8" r="1.8" fill="#36c"/><circle cx="9" cy="17" r="1.8" fill="#fc0"/><path d="M14 20L24 3" stroke="#c88a3a" stroke-width="2"/></svg>
<svg class="a" style="left:932px;top:8px" width="26" height="26" viewBox="0 0 26 26"><path d="M13 1c3 5 9 9 9 15a9 9 0 0 1-18 0c0-6 6-10 9-15z" fill="#8a5cf0"/><path d="M13 1c3 5 9 9 9 15a9 9 0 0 1-9 9z" fill="#e34bb0"/><path d="M4 16a9 9 0 0 0 9 9c-4-3-5-8-2-12z" fill="#28a0f0"/></svg>
<svg class="a" style="left:983px;top:8px" width="26" height="26" viewBox="0 0 26 26"><ellipse cx="13" cy="13" rx="11" ry="11.5" fill="#ff1b2d"/><ellipse cx="13" cy="13" rx="5" ry="8.5" fill="#dcdcdc"/></svg>
<svg class="a" style="left:1034px;top:8px" width="26" height="26" viewBox="0 0 26 26"><path d="M2 4h22v15l-4-1-2 4-3-3H2z" fill="#5865f2"/><path d="M7 14c1-4 2-6 3-6 2 1 4 1 6 0 1 0 2 2 3 6-2 1.5-4 2-6 2s-4-.5-6-2z" fill="#fff"/><circle cx="10.5" cy="12.5" r="1.3" fill="#5865f2"/><circle cx="15.5" cy="12.5" r="1.3" fill="#5865f2"/></svg>
<div class="a" style="left:1073px;top:0;width:50px;height:42px;background:#efefef"></div>
<svg class="a" style="left:1085px;top:8px" width="27" height="27" viewBox="0 0 18 18"><path d="M4 3.4h7v2.9H6.4z" fill="#ea7600"/><path d="M0.9 10.6L8 5.4l1.8 2.1L2.6 12.5z" fill="#ea7600"/><path d="M1.2 15.9l5.6-4.6 1.5 2.3-5.5 3.6z" fill="#ea7600"/><circle cx="11.3" cy="10.4" r="5.7" fill="#ea7600"/><circle cx="11.3" cy="10.4" r="3.5" fill="#fff"/><circle cx="11.3" cy="10.4" r="2" fill="#265787"/></svg>
<div class="a" style="left:720px;top:39px;width:41px;height:3px;background:#0078d7"></div>
<div class="a" style="left:771px;top:39px;width:41px;height:3px;background:#0078d7"></div>
<div class="a" style="left:822px;top:39px;width:41px;height:3px;background:#0078d7"></div>
<div class="a" style="left:975px;top:39px;width:41px;height:3px;background:#0078d7"></div>
<div class="a" style="left:1026px;top:39px;width:41px;height:3px;background:#0078d7"></div>
<div class="a" style="left:1073px;top:39px;width:50px;height:3px;background:#0078d7"></div>
<svg class="a" style="left:1744px;top:15px" width="14" height="10" viewBox="0 0 14 10"><path d="M1 8l6-6 6 6" stroke="#111" stroke-width="1.5" fill="none"/></svg>
<svg class="a" style="left:1766px;top:13px" width="20" height="14" viewBox="0 0 20 14"><path d="M4 12a3.5 3.5 0 0 1 0-7 5 5 0 0 1 9.5-1A4 4 0 0 1 16 12z" fill="none" stroke="#111" stroke-width="1.4"/></svg>
<svg class="a" style="left:1791px;top:12px" width="20" height="18" viewBox="0 0 20 18"><path d="M2 6h3l5-4v14l-5-4H2z" fill="none" stroke="#111" stroke-width="1.4"/><path d="M12.5 6a4 4 0 0 1 0 6M14.5 4a7 7 0 0 1 0 10M16.5 2a10 10 0 0 1 0 14" stroke="#111" stroke-width="1.3" fill="none"/></svg>
<svg class="a" style="left:1817px;top:12px" width="19" height="18" viewBox="0 0 19 18"><rect x="4" y="2" width="14" height="10" fill="none" stroke="#111" stroke-width="1.4"/><path d="M1 6h6v10H1zM10 12v4h-3M4 16h3" fill="none" stroke="#111" stroke-width="1.4"/></svg>
<svg class="a" style="left:1842px;top:12px" width="18" height="18" viewBox="0 0 18 18"><circle cx="9" cy="9" r="7.5" fill="none" stroke="#555" stroke-width="1.3"/><path d="M6 6l6 6M12 6l-6 6" stroke="#555" stroke-width="1.3"/></svg>
<div class="t" style="left:1876px;top:5px;color:#111;font-size:12.5px;letter-spacing:0.2px">오후 3:58</div>
<div class="t" style="left:1868px;top:23.5px;color:#111;font-size:12.5px;letter-spacing:0.3px">2021-03-12</div><div class="a" style="left:1995px;top:0;width:1px;height:42px;background:#b8b8b8"></div>
<svg class="a" style="left:1955px;top:11px" width="30" height="28" viewBox="0 0 30 28"><path d="M2 2h18v12h-9l-4 4v-4H2z" fill="#111"/><path d="M5 6h12M5 9h12" stroke="#dadada" stroke-width="1.2"/><circle cx="21" cy="17.5" r="7" fill="#dadada" stroke="#111" stroke-width="1.2"/><text x="21" y="22" font-size="12" font-family="Liberation Sans" text-anchor="middle" fill="#111">5</text></svg>
</div>
<div class="t" style="left:1568px;top:984px;font-size:21px;line-height:24px;color:rgba(200,200,200,0.55);letter-spacing:0.3px">Windows 정품 인증</div>
<div class="t" style="left:1568px;top:1011px;font-size:15.5px;line-height:18px;color:rgba(200,200,200,0.55);letter-spacing:0">[설정]으로 이동하여 Windows를 정품 인증합니다.</div>
</body></html>
